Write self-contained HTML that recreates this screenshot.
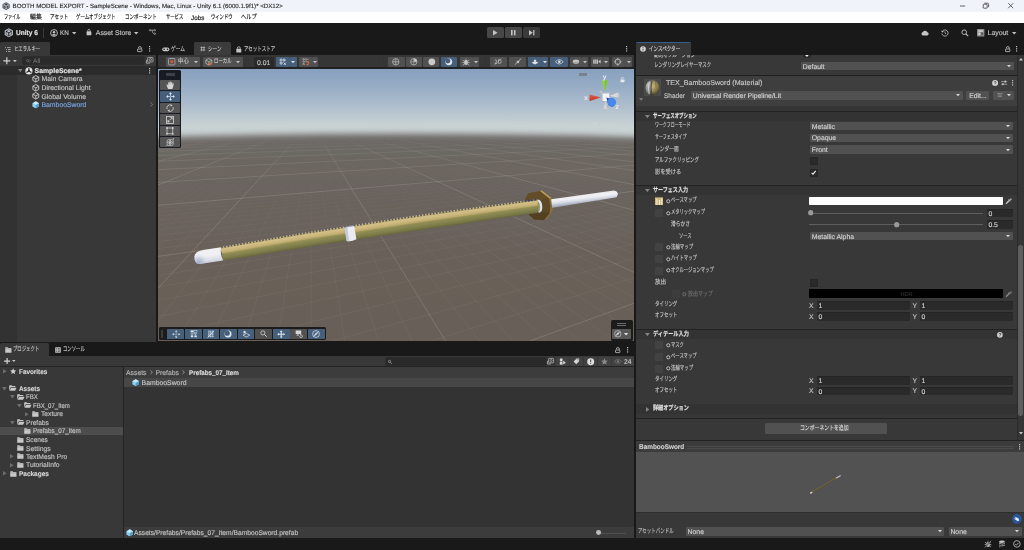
<!DOCTYPE html>
<html><head><meta charset="utf-8"><title>Unity</title>
<style>
html,body{margin:0;padding:0}
body{width:1024px;height:550px;overflow:hidden;background:#191919;position:relative;font-family:"Liberation Sans","Noto Sans CJK JP",sans-serif;text-rendering:geometricPrecision;}
.t{position:absolute;white-space:nowrap;line-height:1.12;-webkit-text-stroke:.14px currentColor;}
.j{transform-origin:0 50%;}
svg{overflow:visible}
#r{position:absolute;left:0;top:0;width:1024px;height:550px;overflow:hidden;will-change:transform;}
</style></head><body><div id="r">
<div style="position:absolute;left:0px;top:0px;width:1024px;height:12px;background:#f0f4fa;"></div>
<svg style="position:absolute;left:1.8px;top:1.6px;" width="8.2" height="8.2" viewBox="0 0 10 10"><path d="M5 .3 9.3 2.7V7.3L5 9.7.7 7.3V2.7Z" fill="#3c4046"/>
<path d="M5 5V8.4M5 5 2 3.3M5 5 8 3.3" stroke="#f0f4fa" stroke-width=".9" fill="none"/><path d="M5 1.6 7.9 3.3V6.7L5 8.4 2.1 6.7V3.3Z" fill="none" stroke="#f0f4fa" stroke-width=".5"/></svg>
<div class="t" style="left:12.6px;top:4px;font-size:6.15px;color:#2e2e2e;">BOOTH MODEL EXPORT - SampleScene - Windows, Mac, Linux - Unity 6.1 (6000.1.9f1)* &lt;DX12&gt;</div>
<svg style="position:absolute;left:958.5px;top:2px;" width="8" height="8" viewBox="0 0 8 8"><path d="M1 4H6.2" stroke="#222" stroke-width=".7"/></svg>
<svg style="position:absolute;left:982px;top:2px;" width="8" height="8" viewBox="0 0 8 8"><rect x="1.2" y="2.2" width="4" height="4" rx=".8" fill="none" stroke="#222" stroke-width=".7"/><path d="M2.4 1.2H5.4Q6.6 1.2 6.6 2.4V5.2" fill="none" stroke="#222" stroke-width=".7"/></svg>
<svg style="position:absolute;left:1007px;top:2px;" width="8" height="8" viewBox="0 0 8 8"><path d="M1.2 1.2 6.2 6.2M6.2 1.2 1.2 6.2" stroke="#222" stroke-width=".7"/></svg>
<div style="position:absolute;left:0px;top:12px;width:1024px;height:11px;background:#ffffff;"></div>
<div class="t j" style="left:3.75px;top:13.86px;font-size:6.5px;color:#111;transform:scaleX(0.627);">ファイル</div>
<div class="t j" style="left:29.5px;top:13.86px;font-size:6.5px;color:#111;transform:scaleX(0.909);">編集</div>
<div class="t j" style="left:49.5px;top:13.86px;font-size:6.5px;color:#111;transform:scaleX(0.700);">アセット</div>
<div class="t j" style="left:75.5px;top:13.86px;font-size:6.5px;color:#111;transform:scaleX(0.678);">ゲームオブジェクト</div>
<div class="t j" style="left:124.5px;top:13.86px;font-size:6.5px;color:#111;transform:scaleX(0.696);">コンポーネント</div>
<div class="t j" style="left:165.75px;top:13.86px;font-size:6.5px;color:#111;transform:scaleX(0.663);">サービス</div>
<div class="t j" style="left:211px;top:13.86px;font-size:6.5px;color:#111;transform:scaleX(0.661);">ウィンドウ</div>
<div class="t j" style="left:240.5px;top:13.86px;font-size:6.5px;color:#111;transform:scaleX(0.800);">ヘルプ</div>
<div class="t" style="left:191px;top:15px;font-size:6.3px;color:#111;">Jobs</div>
<div style="position:absolute;left:0px;top:23px;width:1024px;height:20px;background:#191919;"></div>
<svg style="position:absolute;left:4.3px;top:28px;" width="9.6" height="9.6" viewBox="0 0 10 10"><path d="M5 .3 9.3 2.7V7.3L5 9.7.7 7.3V2.7Z" fill="#b9bec6"/>
<path d="M5 5V8.4M5 5 2 3.3M5 5 8 3.3" stroke="#191919" stroke-width="1" fill="none"/><path d="M5 1.7 7.8 3.3V6.7L5 8.3 2.2 6.7V3.3Z" fill="none" stroke="#191919" stroke-width=".5"/></svg>
<div class="t j" style="left:15.9px;top:30px;font-size:7.0px;color:#e4e4e4;font-weight:bold;transform:scaleX(0.934);">Unity 6</div>
<div style="position:absolute;left:42.7px;top:28px;width:0.8px;height:9.5px;background:#3a3a3a;"></div>
<svg style="position:absolute;left:50px;top:28.6px;" width="8" height="8" viewBox="0 0 8 8"><circle cx="4" cy="4" r="3.4" fill="none" stroke="#c4c4c4" stroke-width=".9"/><circle cx="4" cy="3.2" r="1.2" fill="#c4c4c4"/><path d="M1.7 6.1Q4 3.9 6.3 6.1Q4 7.6 1.7 6.1Z" fill="#c4c4c4"/></svg>
<div class="t j" style="left:59.9px;top:30px;font-size:6.9px;color:#c4c4c4;transform:scaleX(0.918);">KN</div>
<svg style="position:absolute;left:72.1px;top:31.7px;" width="4.4" height="2.4" viewBox="0 0 4.4 2.4"><path d="M0 0H4.4L2.2 2.4Z" fill="#c4c4c4"/></svg>
<svg style="position:absolute;left:86px;top:29.3px;" width="5.9" height="6.6" viewBox="0 .4 7 8"><path d="M2 3.2V2.4a1.5 1.5 0 0 1 3 0V3.2" fill="none" stroke="#c4c4c4" stroke-width=".9"/><rect x=".6" y="3.2" width="5.8" height="4.8" rx=".7" fill="#c4c4c4"/></svg>
<div class="t" style="left:95.8px;top:30px;font-size:6.9px;color:#c4c4c4;">Asset Store</div>
<svg style="position:absolute;left:134.10000000000002px;top:31.7px;" width="4.4" height="2.4" viewBox="0 0 4.4 2.4"><path d="M0 0H4.4L2.2 2.4Z" fill="#c4c4c4"/></svg>
<svg style="position:absolute;left:149px;top:29.4px;" width="7" height="6.1" viewBox="0 0 8 7"><circle cx="1.3" cy="1.4" r=".9" fill="none" stroke="#c4c4c4" stroke-width=".7"/><circle cx="6.6" cy="1.4" r=".9" fill="none" stroke="#c4c4c4" stroke-width=".7"/><circle cx="6.6" cy="5.4" r=".9" fill="none" stroke="#c4c4c4" stroke-width=".7"/><path d="M2.2 1.4H5.7M3.6 1.4Q3.8 5.4 5.7 5.4" fill="none" stroke="#c4c4c4" stroke-width=".7"/></svg>
<div style="position:absolute;left:487.1px;top:27.2px;width:16.8px;height:10.8px;background:#474747;border-radius:1.6px;"></div>
<div style="position:absolute;left:505px;top:27.2px;width:17px;height:10.8px;background:#474747;border-radius:1.6px;"></div>
<div style="position:absolute;left:523px;top:27.2px;width:17px;height:10.8px;background:#3a3a3a;border-radius:1.6px;"></div>
<svg style="position:absolute;left:493px;top:30px;" width="5" height="5.4" viewBox="0 0 5 5.4"><path d="M0 0V5.4L4.6 2.7Z" fill="#c4c4c4"/></svg>
<svg style="position:absolute;left:511.2px;top:30px;" width="5" height="5.4" viewBox="0 0 5 5.4"><rect x="0" y="0" width="1.6" height="5.4" fill="#c4c4c4"/><rect x="2.9" y="0" width="1.6" height="5.4" fill="#c4c4c4"/></svg>
<svg style="position:absolute;left:528.8px;top:30px;" width="6" height="5.4" viewBox="0 0 6 5.4"><path d="M0 0V5.4L3.8 2.7Z" fill="#c4c4c4"/><rect x="4.2" y="0" width="1.2" height="5.4" fill="#c4c4c4"/></svg>
<svg style="position:absolute;left:921.3px;top:29.6px;" width="8.4" height="6" viewBox="0 0 8.4 6"><path d="M2 5.6A1.9 1.9 0 0 1 1.9 1.9 2.5 2.5 0 0 1 6.4 2.2 1.8 1.8 0 0 1 6.5 5.6Z" fill="#c4c4c4"/></svg>
<svg style="position:absolute;left:940.8px;top:29px;" width="8" height="8" viewBox="0 0 8 8"><path d="M1.2 2.6A3.1 3.1 0 1 1 .9 4.6" fill="none" stroke="#c4c4c4" stroke-width=".8"/><path d="M.2 1.4 1 3.4 3 2.8Z" fill="#c4c4c4"/><path d="M4 2.4V4.2L5.2 4.9" fill="none" stroke="#c4c4c4" stroke-width=".7"/></svg>
<svg style="position:absolute;left:960.5px;top:29px;" width="8" height="8" viewBox="0 0 8 8"><circle cx="3.2" cy="3.2" r="2.3" fill="none" stroke="#c4c4c4" stroke-width=".9"/><path d="M4.9 4.9 7.2 7.2" stroke="#c4c4c4" stroke-width="1.1"/></svg>
<svg style="position:absolute;left:977.3px;top:29px;" width="7.4" height="7.4" viewBox="0 0 7.4 7.4"><rect x="0" y="0" width="7.4" height="7.4" rx=".6" fill="#8c8c8c"/><rect x="1.3" y="1.3" width="4.8" height="1.5" fill="#d6d6d6"/><rect x="1.3" y="3.6" width="2" height="2.5" fill="#d6d6d6"/><rect x="4.1" y="3.6" width="2" height="2.5" fill="#5a5a5a"/></svg>
<div class="t" style="left:987.6px;top:30px;font-size:6.9px;color:#c4c4c4;">Layout</div>
<svg style="position:absolute;left:1012.4px;top:31.7px;" width="4.4" height="2.4" viewBox="0 0 4.4 2.4"><path d="M0 0H4.4L2.2 2.4Z" fill="#c4c4c4"/></svg>
<div style="position:absolute;left:0px;top:43px;width:156.3px;height:298.6px;background:#383838;"></div>
<div style="position:absolute;left:0px;top:43px;width:156.3px;height:12px;background:#191919;"></div>
<div style="position:absolute;left:0px;top:42.4px;width:50px;height:12.6px;background:#383838;border-radius:1.5px 1.5px 0 0;"></div>
<svg style="position:absolute;left:4.8px;top:46.6px;" width="5.6" height="5" viewBox="0 0 5.6 5"><path d="M0 .6H1M2 .6H5.6M1 2.5H2M3 2.5H5.6M1 4.4H2M3 4.4H5.6" stroke="#bdbdbd" stroke-width=".8"/></svg>
<div class="t j" style="left:13.6px;top:45.56px;font-size:6.5px;color:#c0c0c0;transform:scaleX(0.669);">ヒエラルキー</div>
<svg style="position:absolute;left:137.10000000000002px;top:46px;" width="5.4" height="6" viewBox="0 0 5.4 6"><path d="M4.3 3V2a1.45 1.45 0 0 0-2.9 0V2.3" fill="none" stroke="#c4c4c4" stroke-width=".8"/><rect x=".5" y="3" width="4.4" height="2.6" rx=".5" fill="none" stroke="#c4c4c4" stroke-width=".8"/></svg>
<svg style="position:absolute;left:148.70000000000002px;top:46.400000000000006px;" width="1.2" height="5.6" viewBox="0 0 1.2 5.6"><rect x="0" y="0" width="1.2" height="1.2" fill="#c4c4c4"/><rect x="0" y="2.2" width="1.2" height="1.2" fill="#c4c4c4"/><rect x="0" y="4.4" width="1.2" height="1.2" fill="#c4c4c4"/></svg>
<svg style="position:absolute;left:3.2px;top:57.2px;" width="7.6" height="7.6" viewBox="0 0 7.6 7.6"><path d="M3.8 .3V7.3M.3 3.8H7.3" stroke="#d0d0d0" stroke-width="1.2"/></svg>
<svg style="position:absolute;left:12.5px;top:59.5px;" width="3.8" height="2.2" viewBox="0 0 3.8 2.2"><path d="M0 0H3.8L1.9 2.2Z" fill="#c4c4c4"/></svg>
<div style="position:absolute;left:23.3px;top:57.1px;width:121px;height:7px;background:#2a2a2a;border-radius:1px;box-shadow:0 0 0 .5px #212121;"></div>
<svg style="position:absolute;left:26.4px;top:58.6px;" width="5" height="4.5" viewBox="0 0 5 4.5"><circle cx="1.7" cy="1.7" r="1.2" fill="none" stroke="#6e6e6e" stroke-width=".7"/><path d="M2.6 2.6 4 4M3.4 1.4H5" stroke="#6e6e6e" stroke-width=".7"/></svg>
<div class="t" style="left:33px;top:58px;font-size:6.6px;color:#6a6a6a;">All</div>
<svg style="position:absolute;left:146.3px;top:57.4px;" width="7.4" height="6.6" viewBox="0 0 7.4 6.6"><rect x="1.6" y=".4" width="5.4" height="4.6" rx=".8" fill="none" stroke="#c4c4c4" stroke-width=".7"/><circle cx="4.4" cy="2.6" r="1.1" fill="none" stroke="#c4c4c4" stroke-width=".7"/><path d="M.4 3V6.2H4" fill="none" stroke="#c4c4c4" stroke-width=".7"/></svg>
<div style="position:absolute;left:0px;top:66px;width:17.2px;height:275.6px;background:#323232;"></div>
<div style="position:absolute;left:0px;top:66px;width:156.3px;height:8.6px;background:#2b2b2b;"></div>
<div style="position:absolute;left:0px;top:65.6px;width:156.3px;height:0.6px;background:#2a2a2a;"></div>
<svg style="position:absolute;left:18.099999999999998px;top:69.10000000000001px;" width="4.6" height="3.2" viewBox="0 0 4.6 3.2"><path d="M0 0H4.6L2.3 3.2Z" fill="#808080"/></svg>
<svg style="position:absolute;left:24.6px;top:66.6px;" width="7.8" height="7.8" viewBox="0 0 10 10"><circle cx="5" cy="5" r="4.6" fill="#e4e4e4"/><path d="M5 5V1.2M5 5 1.8 7M5 5 8.2 7" stroke="#2a2a2a" stroke-width="1.5" fill="none"/><circle cx="5" cy="5" r="1.3" fill="#2a2a2a"/></svg>
<div class="t" style="left:34.6px;top:68px;font-size:6.85px;color:#e6e6e6;font-weight:bold;">SampleScene*</div>
<svg style="position:absolute;left:149.20000000000002px;top:67.7px;" width="1.2" height="5.6" viewBox="0 0 1.2 5.6"><rect x="0" y="0" width="1.2" height="1.2" fill="#c4c4c4"/><rect x="0" y="2.2" width="1.2" height="1.2" fill="#c4c4c4"/><rect x="0" y="4.4" width="1.2" height="1.2" fill="#c4c4c4"/></svg>
<svg style="position:absolute;left:32.2px;top:75.2px;" width="7.6" height="7.6" viewBox="0 0 10 10"><path d="M5 .7 8.9 2.9V7.1L5 9.3 1.1 7.1V2.9Z" fill="none" stroke="#c4c4c4" stroke-width="1.25"/><path d="M1.1 2.9 5 5.1 8.9 2.9M5 5.1V9.3" fill="none" stroke="#c4c4c4" stroke-width="1.25"/></svg>
<div class="t" style="left:41.5px;top:76px;font-size:6.85px;color:#c4c4c4;">Main Camera</div>
<svg style="position:absolute;left:32.2px;top:83.8px;" width="7.6" height="7.6" viewBox="0 0 10 10"><path d="M5 .7 8.9 2.9V7.1L5 9.3 1.1 7.1V2.9Z" fill="none" stroke="#c4c4c4" stroke-width="1.25"/><path d="M1.1 2.9 5 5.1 8.9 2.9M5 5.1V9.3" fill="none" stroke="#c4c4c4" stroke-width="1.25"/></svg>
<div class="t" style="left:41.5px;top:85px;font-size:6.85px;color:#c4c4c4;">Directional Light</div>
<svg style="position:absolute;left:32.2px;top:92.3px;" width="7.6" height="7.6" viewBox="0 0 10 10"><path d="M5 .7 8.9 2.9V7.1L5 9.3 1.1 7.1V2.9Z" fill="none" stroke="#c4c4c4" stroke-width="1.25"/><path d="M1.1 2.9 5 5.1 8.9 2.9M5 5.1V9.3" fill="none" stroke="#c4c4c4" stroke-width="1.25"/></svg>
<div class="t" style="left:41.5px;top:94px;font-size:6.85px;color:#c4c4c4;">Global Volume</div>
<svg style="position:absolute;left:32.2px;top:100.6px;" width="7.6" height="7.6" viewBox="0 0 10 10"><path d="M5 .4 9.2 2.8V7.2L5 9.6.8 7.2V2.8Z" fill="#7dc4ea"/><path d="M.8 2.8 5 5.2V9.6L.8 7.2Z" fill="#8ecfee"/><path d="M9.2 2.8 5 5.2V9.6L9.2 7.2Z" fill="#4f9fd0"/><path d="M5 .4 9.2 2.8 5 5.2.8 2.8Z" fill="#c6e9f8"/></svg>
<div class="t" style="left:41.5px;top:102px;font-size:6.85px;color:#7ba5e2;">BambooSword</div>
<svg style="position:absolute;left:150.4px;top:102.2px;" width="3" height="4.8" viewBox="0 0 3 4.8"><path d="M.4 .4 2.6 2.4.4 4.4" fill="none" stroke="#8a8a8a" stroke-width=".7"/></svg>
<div style="position:absolute;left:157.6px;top:43px;width:476.6px;height:298.3px;background:#383838;"></div>
<div style="position:absolute;left:156.3px;top:43px;width:1.5px;height:298.6px;background:#191919;"></div>
<div style="position:absolute;left:157.6px;top:43px;width:476.6px;height:12px;background:#191919;"></div>
<svg style="position:absolute;left:161.6px;top:46.8px;" width="7.6" height="4.6" viewBox="0 0 7.6 4.6"><rect x=".2" y=".4" width="7.2" height="3.8" rx="1.9" fill="#c4c4c4"/><circle cx="2.1" cy="2.3" r=".8" fill="#191919"/><circle cx="5.5" cy="2.3" r=".8" fill="#191919"/></svg>
<div class="t j" style="left:170.8px;top:45.56px;font-size:6.5px;color:#c4c4c4;transform:scaleX(0.717);">ゲーム</div>
<div style="position:absolute;left:194px;top:42.4px;width:36.8px;height:12.6px;background:#3c3c3c;border-radius:1.5px 1.5px 0 0;"></div>
<svg style="position:absolute;left:199.6px;top:46.4px;" width="5.6" height="5.6" viewBox="0 0 5.6 5.6"><path d="M.4 1.6H5.2M.4 4H5.2M1.6 .4V5.2M4 .4V5.2" stroke="#c4c4c4" stroke-width=".7"/></svg>
<div class="t j" style="left:208px;top:45.56px;font-size:6.5px;color:#c8c8c8;transform:scaleX(0.708);">シーン</div>
<svg style="position:absolute;left:236px;top:45.6px;" width="5.6" height="7" viewBox="0 0 5.6 7"><path d="M1.4 2.8V2.1a1.4 1.4 0 0 1 2.8 0V2.8" fill="none" stroke="#c4c4c4" stroke-width=".8"/><rect x=".3" y="2.8" width="5" height="3.8" rx=".6" fill="#c4c4c4"/></svg>
<div class="t j" style="left:244px;top:45.56px;font-size:6.5px;color:#c4c4c4;transform:scaleX(0.685);">アセットストア</div>
<svg style="position:absolute;left:626.1999999999999px;top:46.400000000000006px;" width="1.2" height="5.6" viewBox="0 0 1.2 5.6"><rect x="0" y="0" width="1.2" height="1.2" fill="#c4c4c4"/><rect x="0" y="2.2" width="1.2" height="1.2" fill="#c4c4c4"/><rect x="0" y="4.4" width="1.2" height="1.2" fill="#c4c4c4"/></svg>
<div style="position:absolute;left:157.6px;top:55px;width:476.6px;height:13.4px;background:#363636;"></div>
<div style="position:absolute;left:160.2px;top:57.6px;width:0.8px;height:8.8px;background:#333333;"></div>
<div style="position:absolute;left:161.8px;top:57.6px;width:0.8px;height:8.8px;background:#333333;"></div>
<div style="position:absolute;left:166px;top:57.3px;width:34.4px;height:9.4px;background:#515151;border-radius:1.2px;"></div>
<svg style="position:absolute;left:168.4px;top:58.2px;" width="7.4" height="7.4" viewBox="0 0 7.4 7.4"><rect x=".5" y=".5" width="6.4" height="6.4" rx="1" fill="none" stroke="#b4b4b4" stroke-width=".8"/><rect x="2.2" y="2.2" width="3" height="3" fill="#c9573c"/></svg>
<div class="t j" style="left:178px;top:58.42px;font-size:6.4px;color:#c4c4c4;transform:scaleX(0.856);">中心</div>
<svg style="position:absolute;left:193.6px;top:60.95px;" width="4" height="2.3" viewBox="0 0 4 2.3"><path d="M0 0H4L2.0 2.3Z" fill="#c4c4c4"/></svg>
<div style="position:absolute;left:202.6px;top:57.3px;width:40.4px;height:9.4px;background:#515151;border-radius:1.2px;"></div>
<svg style="position:absolute;left:205px;top:58.2px;" width="7.6" height="7.6" viewBox="0 0 10 10"><path d="M5 .7 8.9 2.9V7.1L5 9.3 1.1 7.1V2.9Z M1.1 2.9 5 5.1 8.9 2.9M5 5.1V9.3" fill="none" stroke="#c4c4c4" stroke-width=".9"/><circle cx="7.2" cy="7.6" r="2" fill="#d4673f"/></svg>
<div class="t j" style="left:214.2px;top:58.42px;font-size:6.4px;color:#c4c4c4;transform:scaleX(0.687);">ローカル</div>
<svg style="position:absolute;left:235.6px;top:60.95px;" width="4" height="2.3" viewBox="0 0 4 2.3"><path d="M0 0H4L2.0 2.3Z" fill="#c4c4c4"/></svg>
<div style="position:absolute;left:246.2px;top:57.6px;width:0.8px;height:8.8px;background:#333333;"></div>
<div style="position:absolute;left:247.8px;top:57.6px;width:0.8px;height:8.8px;background:#333333;"></div>
<div style="position:absolute;left:254.2px;top:57.3px;width:20.2px;height:9.4px;background:#2a2a2a;border-radius:1.2px;"></div>
<div class="t" style="left:257px;top:60px;font-size:6.85px;color:#c4c4c4;">0.01</div>
<div style="position:absolute;left:276.4px;top:57.3px;width:13.2px;height:9.4px;background:#46607c;border-radius:1.2px;"></div>
<div style="position:absolute;left:290px;top:57.3px;width:6.6px;height:9.4px;background:#46607c;border-radius:1.2px;"></div>
<svg style="position:absolute;left:279.4px;top:58.4px;" width="7.4" height="7.4" viewBox="0 0 7.4 7.4"><path d="M2 .4V7M5 .4V4M.4 2H7M.4 5H4" stroke="#e4e4e4" stroke-width=".8"/><path d="M4.6 4.6 7 7M7 4.6 4.6 7" stroke="#e4e4e4" stroke-width=".8"/></svg>
<svg style="position:absolute;left:291.3px;top:60.95px;" width="4" height="2.3" viewBox="0 0 4 2.3"><path d="M0 0H4L2.0 2.3Z" fill="#e4e4e4"/></svg>
<div style="position:absolute;left:298.8px;top:57.3px;width:12.8px;height:9.4px;background:#515151;border-radius:1.2px;"></div>
<div style="position:absolute;left:312px;top:57.3px;width:6.4px;height:9.4px;background:#515151;border-radius:1.2px;"></div>
<svg style="position:absolute;left:301.6px;top:58.4px;" width="7.4" height="7.4" viewBox="0 0 7.4 7.4"><path d="M.4 1.4H7M.4 3.8H7M.4 6.2H3M1.6 .2V7M4 .2V4" stroke="#c4c4c4" stroke-width=".7" stroke-dasharray="1 .6"/><path d="M4.4 6.4a1.5 1.5 0 1 0 0-2.4" fill="none" stroke="#d4673f" stroke-width="1.1"/></svg>
<svg style="position:absolute;left:313.2px;top:60.95px;" width="4" height="2.3" viewBox="0 0 4 2.3"><path d="M0 0H4L2.0 2.3Z" fill="#c4c4c4"/></svg>
<div style="position:absolute;left:383.2px;top:57.6px;width:0.8px;height:8.8px;background:#333333;"></div>
<div style="position:absolute;left:384.8px;top:57.6px;width:0.8px;height:8.8px;background:#333333;"></div>
<div style="position:absolute;left:388.2px;top:57.3px;width:16.4px;height:9.4px;background:#515151;border-radius:1.2px;"></div>
<div style="position:absolute;left:406px;top:57.3px;width:15.8px;height:9.4px;background:#515151;border-radius:1.2px;"></div>
<div style="position:absolute;left:423.2px;top:57.3px;width:16.2px;height:9.4px;background:#515151;border-radius:1.2px;"></div>
<div style="position:absolute;left:440.6px;top:57.3px;width:16.8px;height:9.4px;background:#46607c;border-radius:1.2px;"></div>
<svg style="position:absolute;left:392.4px;top:58.2px;" width="7.6" height="7.6" viewBox="0 0 7.6 7.6"><circle cx="3.8" cy="3.8" r="3.2" fill="none" stroke="#c4c4c4" stroke-width=".7"/><path d="M.6 3.8H7M3.8 .6V7" stroke="#c4c4c4" stroke-width=".7"/></svg>
<svg style="position:absolute;left:410.2px;top:58.2px;" width="7.6" height="7.6" viewBox="0 0 7.6 7.6"><circle cx="3.8" cy="3.8" r="3.2" fill="none" stroke="#c4c4c4" stroke-width=".7"/><path d="M3.8 .6V3.8H7A3.2 3.2 0 0 0 3.8 .6Z" fill="#c4c4c4"/><path d="M.6 3.8H7M3.8 .6V7" stroke="#c4c4c4" stroke-width=".5"/></svg>
<svg style="position:absolute;left:427.8px;top:58.2px;" width="7.6" height="7.6" viewBox="0 0 7.6 7.6"><circle cx="3.8" cy="3.8" r="3.4" fill="#c9c9c9"/></svg>
<svg style="position:absolute;left:445px;top:58.2px;" width="7.6" height="7.6" viewBox="0 0 7.6 7.6"><circle cx="3.8" cy="3.8" r="3.4" fill="#e8e8e8"/><circle cx="2.9" cy="3" r="2.5" fill="#46607c"/></svg>
<div style="position:absolute;left:459.8px;top:57.3px;width:13px;height:9.4px;background:#515151;border-radius:1.2px;"></div>
<div style="position:absolute;left:473.2px;top:57.3px;width:5.8px;height:9.4px;background:#515151;border-radius:1.2px;"></div>
<svg style="position:absolute;left:462.2px;top:58px;" width="8" height="8" viewBox="0 0 8 8"><ellipse cx="4" cy="4.4" rx="2" ry="2.6" fill="#c4c4c4"/><path d="M4 1.6V.6M.8 2.2 2.4 3.2M7.2 2.2 5.6 3.2M.4 4.6H2M7.6 4.6H6M.8 7.2 2.4 6M7.2 7.2 5.6 6" stroke="#c4c4c4" stroke-width=".7"/></svg>
<svg style="position:absolute;left:474.1px;top:60.95px;" width="4" height="2.3" viewBox="0 0 4 2.3"><path d="M0 0H4L2.0 2.3Z" fill="#c4c4c4"/></svg>
<div style="position:absolute;left:483.6px;top:57.6px;width:0.8px;height:8.8px;background:#333333;"></div>
<div style="position:absolute;left:485.2px;top:57.6px;width:0.8px;height:8.8px;background:#333333;"></div>
<div style="position:absolute;left:490.2px;top:57.3px;width:16.4px;height:9.4px;background:#515151;border-radius:1.2px;"></div>
<div style="position:absolute;left:509px;top:57.3px;width:16.8px;height:9.4px;background:#515151;border-radius:1.2px;"></div>
<svg style="position:absolute;left:494.4px;top:58.4px;" width="8" height="7.4" viewBox="0 0 8 7.4"><path d="M.8 2.2Q2.4 1 2.6 2.6T.8 5.4H3M4.4 1.6H5.6Q7.2 1.8 7.2 3.6T5.6 5.4H4.4Z" fill="none" stroke="#c4c4c4" stroke-width=".7"/><path d="M.6 6.8 7.4 .6" stroke="#c4c4c4" stroke-width=".7"/></svg>
<svg style="position:absolute;left:513.6px;top:58.4px;" width="8" height="7.4" viewBox="0 0 8 7.4"><path d="M4 2.2L4.6 3.2 5.8 3.4 4.9 4.2 5.2 5.4 4 4.8 2.8 5.4 3.1 4.2 2.2 3.4 3.4 3.2Z" fill="#c4c4c4"/><path d="M.8 6.8 7.2 .6" stroke="#c4c4c4" stroke-width=".8"/></svg>
<div style="position:absolute;left:528.1px;top:57.3px;width:12.6px;height:9.4px;background:#46607c;border-radius:1.2px;"></div>
<div style="position:absolute;left:541.1px;top:57.3px;width:6.8px;height:9.4px;background:#46607c;border-radius:1.2px;"></div>
<svg style="position:absolute;left:530.6px;top:58.4px;" width="8" height="7.4" viewBox="0 0 8 7.4"><path d="M4 3 7.4 4.7 4 6.4.6 4.7Z" fill="#e4e4e4"/><path d="M4 1 4.5 2 5.6 2.1 4.8 2.8 5 3.8 4 3.3 3 3.8 3.2 2.8 2.4 2.1 3.5 2Z" fill="#e4e4e4"/></svg>
<svg style="position:absolute;left:542.8px;top:60.95px;" width="4" height="2.3" viewBox="0 0 4 2.3"><path d="M0 0H4L2.0 2.3Z" fill="#e4e4e4"/></svg>
<div style="position:absolute;left:550.2px;top:57.3px;width:17.4px;height:9.4px;background:#46607c;border-radius:1.2px;"></div>
<svg style="position:absolute;left:554.6px;top:59.2px;" width="8.6" height="5.6" viewBox="0 0 8.6 5.6"><path d="M.4 2.8Q4.3 -1.6 8.2 2.8Q4.3 7.2 .4 2.8Z" fill="none" stroke="#e4e4e4" stroke-width=".7"/><circle cx="4.3" cy="2.8" r="1.3" fill="#e4e4e4"/></svg>
<div style="position:absolute;left:569.8px;top:57.3px;width:11.8px;height:9.4px;background:#515151;border-radius:1.2px;"></div>
<div style="position:absolute;left:582px;top:57.3px;width:6px;height:9.4px;background:#515151;border-radius:1.2px;"></div>
<svg style="position:absolute;left:571.6px;top:58.8px;" width="8" height="6.6" viewBox="0 0 8 6.6"><ellipse cx="4" cy="2.2" rx="3.2" ry="1.6" fill="#c4c4c4"/><path d="M.8 3.6Q4 6 7.2 3.6" fill="none" stroke="#c4c4c4" stroke-width=".8"/></svg>
<svg style="position:absolute;left:583.0px;top:60.95px;" width="4" height="2.3" viewBox="0 0 4 2.3"><path d="M0 0H4L2.0 2.3Z" fill="#c4c4c4"/></svg>
<div style="position:absolute;left:590.8px;top:57.3px;width:11.8px;height:9.4px;background:#515151;border-radius:1.2px;"></div>
<div style="position:absolute;left:603px;top:57.3px;width:6px;height:9.4px;background:#515151;border-radius:1.2px;"></div>
<svg style="position:absolute;left:592.6px;top:59.4px;" width="8" height="5.4" viewBox="0 0 8 5.4"><rect x=".2" y=".4" width="4.8" height="4.4" rx=".5" fill="#c4c4c4"/><path d="M5.2 2.6 7.6 .8V4.4Z" fill="#c4c4c4"/><path d="M1.8 .4V4.8M3.4 .4V4.8" stroke="#515151" stroke-width=".5"/></svg>
<svg style="position:absolute;left:604.0px;top:60.95px;" width="4" height="2.3" viewBox="0 0 4 2.3"><path d="M0 0H4L2.0 2.3Z" fill="#c4c4c4"/></svg>
<div style="position:absolute;left:611.7px;top:57.3px;width:13px;height:9.4px;background:#515151;border-radius:1.2px;"></div>
<div style="position:absolute;left:625.1px;top:57.3px;width:6.8px;height:9.4px;background:#515151;border-radius:1.2px;"></div>
<svg style="position:absolute;left:614.2px;top:58.2px;" width="7.6" height="7.6" viewBox="0 0 7.6 7.6"><circle cx="3.8" cy="3.8" r="2.7" fill="none" stroke="#c4c4c4" stroke-width=".8"/><path d="M3.8 0V2.2M3.8 5.4V7.6M0 3.8H2.2M5.4 3.8H7.6" stroke="#c4c4c4" stroke-width=".8"/></svg>
<svg style="position:absolute;left:626.5px;top:60.95px;" width="4" height="2.3" viewBox="0 0 4 2.3"><path d="M0 0H4L2.0 2.3Z" fill="#c4c4c4"/></svg>
<div style="position:absolute;left:157.8px;top:68.4px;width:476.4px;height:272.9px;overflow:hidden;background:linear-gradient(180deg,#87a0be 0px,#97acc5 18.6px,#adbdcd 37px,#c1ccd2 51.6px,#c9d3d4 58px,#c8d1d1 80px);">
<svg style="position:absolute;left:0;top:0" width="476.4" height="272.9" viewBox="0 0 476.4 272.9"><defs><filter id="hb" filterUnits="userSpaceOnUse" x="-40" y="0" width="556.4" height="312.9"><feGaussianBlur stdDeviation="0 3.1"/></filter><linearGradient id="gd" gradientUnits="userSpaceOnUse" x1="0" y1="67.6" x2="0" y2="272.9"><stop offset="0" stop-color="#6d6966"/><stop offset=".12" stop-color="#6c6661"/><stop offset=".4" stop-color="#6a625b"/><stop offset="1" stop-color="#686058"/></linearGradient></defs><path filter="url(#hb)" d="M-40 70.4Q238.2 61.2 516.4 70.4V312.9H-40Z" fill="url(#gd)"/></svg>
<svg style="position:absolute;left:0;top:0" width="476.4" height="272.9" viewBox="0 0 476.4 272.9"><defs><linearGradient id="gf" gradientUnits="userSpaceOnUse" x1="0" y1="69.6" x2="0" y2="121.6"><stop offset="0" stop-color="#111"/><stop offset=".3" stop-color="#888"/><stop offset="1" stop-color="#fff"/></linearGradient><linearGradient id="gf2" gradientUnits="userSpaceOnUse" x1="0" y1="81.6" x2="0" y2="201.6"><stop offset="0" stop-color="#000"/><stop offset=".35" stop-color="#666"/><stop offset="1" stop-color="#fff"/></linearGradient><mask id="gm" maskUnits="userSpaceOnUse" x="0" y="0" width="476.4" height="272.9"><rect x="0" y="69.6" width="476.4" height="272.9" fill="url(#gf)"/></mask><mask id="gm2" maskUnits="userSpaceOnUse" x="0" y="0" width="476.4" height="272.9"><rect x="0" y="77.6" width="476.4" height="272.9" fill="url(#gf2)"/></mask></defs><g mask="url(#gm2)"><path d="M-298.9 78.5L-1.3 63.1M-299.2 78.7L-0.2 63.1M-299.4 78.9L1.1 63.1M-299.7 79.1L2.4 63.1M-300.0 79.3L3.5 63.1M-298.7 79.5L4.8 63.1M-299.0 79.7L6.1 63.1M-299.3 79.9L7.3 63.1M-299.5 80.2L8.6 63.1M-298.5 80.5L11.0 63.1M-298.8 80.8L12.3 63.1M-299.0 81.0L13.4 63.1M-299.3 81.3L14.7 63.1M-299.6 81.5L16.0 63.1M-299.9 81.8L17.1 63.1M-298.5 81.9L18.4 63.1M-298.8 82.2L19.7 63.1M-299.1 82.5L20.9 63.1M-299.7 83.0L23.4 63.1M-298.3 83.2L24.6 63.1M-298.6 83.5L25.9 63.1M-298.9 83.8L27.2 63.1M-299.2 84.1L28.3 63.1M-299.5 84.4L29.6 63.1M-299.8 84.7L30.7 63.1M-298.3 84.9L32.0 63.1M-298.6 85.3L33.3 63.1M-299.3 85.9L35.7 63.1M-299.6 86.3L37.0 63.1M-300.0 86.6L38.2 63.1M-298.3 86.9L39.5 63.1M-298.7 87.2L40.7 63.1M-299.0 87.6L41.9 63.1M-299.4 88.0L43.2 63.1M-299.7 88.4L44.3 63.1M-298.0 88.7L45.6 63.1M-298.7 89.5L48.1 63.1M-299.1 90.0L49.3 63.1M-299.5 90.4L50.6 63.1M-299.9 90.9L51.8 63.1M-298.0 91.2L53.1 63.1M-298.4 91.6L54.3 63.1M-298.8 92.1L55.5 63.1M-299.2 92.6L56.8 63.1M-299.6 93.2L57.9 63.1M-298.0 94.0L60.5 63.1M-298.4 94.6L61.7 63.1M-298.9 95.2L62.9 63.1M-299.3 95.8L64.2 63.1M-299.8 96.4L65.4 63.1M-297.6 96.8L66.7 63.1M-298.1 97.4L67.9 63.1M-298.5 98.1L69.1 63.1M-299.0 98.8L70.4 63.1M-299.9 100.2L72.8 63.1M-297.6 100.7L74.1 63.1M-298.1 101.5L75.3 63.1M-298.6 102.3L76.5 63.1M-299.1 103.1L77.8 63.1M-299.6 104.0L79.0 63.1M-297.1 104.5L80.2 63.1M-297.6 105.4L81.5 63.1M-298.1 106.4L82.7 63.1M-299.2 108.4L85.2 63.1M-299.8 109.4L86.4 63.1M-297.0 110.1L87.7 63.1M-297.5 111.2L88.9 63.1M-298.1 112.4L90.1 63.1M-298.7 113.6L91.4 63.1M-299.4 114.9L92.6 63.1M-296.3 115.7L93.8 63.1M-296.9 117.1L95.1 63.1M-298.2 120.0L97.6 63.1M-298.9 121.6L98.8 63.1M-299.6 123.3L100.0 63.1M-296.0 124.3L101.3 63.1M-296.7 126.1L102.5 63.1M-297.5 128.0L103.7 63.1M-298.2 130.0L105.0 63.1M-299.0 132.1L106.2 63.1M-299.9 134.4L107.4 63.1M-296.5 138.3L109.9 63.1M-297.4 140.9L111.2 63.1M-298.3 143.7L112.4 63.1M-299.3 146.6L113.6 63.1M-294.4 148.6L114.9 63.1M-295.3 151.9L116.1 63.1M-296.3 155.4L117.3 63.1M-297.3 159.3L118.6 63.1M-298.4 163.4L119.8 63.1M-293.6 170.8L122.3 63.1M-294.7 175.9L123.5 63.1M-295.9 181.5L124.8 63.1M-297.1 187.6L126.0 63.1M-298.6 194.4L127.2 63.1M-291.1 198.9L128.5 63.1M-292.3 206.9L129.7 63.1M-293.7 215.8L130.9 63.1M-295.2 225.8L132.2 63.1M-298.9 250.2L134.6 63.1M-288.3 259.2L135.9 63.1M-289.8 275.7L137.1 63.1M-291.6 295.0L138.4 63.1M-293.7 318.1L139.6 63.1M-296.3 346.0L140.8 63.1M-299.5 380.7L142.1 63.1M-281.4 406.6L143.3 63.1M-283.2 458.5L144.5 63.1M-163.5 464.9L147.0 63.1M-95.1 456.7L148.2 63.1M-40.0 471.5L149.5 63.1M27.0 463.0L150.7 63.1M91.2 454.9L152.0 63.1M153.0 469.6L153.2 63.1M215.7 461.2L154.4 63.1M275.9 453.1L155.7 63.1M344.1 467.6L156.9 63.1M459.0 451.3L159.4 63.1M533.5 465.7L160.6 63.1M588.1 457.5L161.9 63.1M668.6 472.4L163.1 63.1M721.2 463.9L164.3 63.1M771.7 455.7L165.6 63.1M754.8 409.3L166.8 63.1M768.5 387.2L168.0 63.1M754.5 354.6L169.3 63.1M754.3 314.6L171.7 63.1M764.5 302.5L173.0 63.1M773.8 291.5L174.2 63.1M763.2 274.5L175.5 63.1M771.5 265.8L176.7 63.1M762.1 252.2L177.9 63.1M769.7 245.2L179.2 63.1M761.3 234.1L180.4 63.1M768.2 228.2L181.6 63.1M766.9 214.1L184.1 63.1M772.9 209.4L185.4 63.1M765.8 202.0L186.6 63.1M771.4 198.1L187.8 63.1M764.9 191.7L189.1 63.1M770.1 188.3L190.3 63.1M775.1 185.0L191.5 63.1M769.0 179.7L192.8 63.1M773.7 176.9L194.0 63.1M772.5 169.7L196.5 63.1M767.2 165.5L197.7 63.1M771.4 163.3L199.0 63.1M775.4 161.1L200.2 63.1M770.4 157.6L201.4 63.1M774.2 155.6L202.7 63.1M769.5 152.4L203.9 63.1M773.2 150.7L205.1 63.1M768.7 147.8L206.4 63.1M775.6 144.7L208.8 63.1M771.4 142.1L210.1 63.1M774.6 140.7L211.3 63.1M770.6 138.4L212.6 63.1M773.7 137.1L213.8 63.1M769.8 134.9L215.0 63.1M772.8 133.8L216.3 63.1M775.8 132.6L217.5 63.1M772.1 130.7L218.7 63.1M771.3 127.9L221.2 63.1M774.1 126.9L222.4 63.1M770.7 125.2L223.7 63.1M773.3 124.3L224.9 63.1M775.9 123.4L226.2 63.1M772.6 121.9L227.4 63.1M775.1 121.1L228.6 63.1M771.9 119.7L229.9 63.1M774.4 118.9L231.1 63.1M773.7 116.9L233.6 63.1M776.0 116.2L234.8 63.1M773.0 115.0L236.0 63.1M775.3 114.3L237.3 63.1M772.4 113.2L238.5 63.1M774.6 112.6L239.7 63.1M771.9 111.5L241.0 63.1M774.0 110.9L242.2 63.1M776.0 110.3L243.5 63.1M775.4 108.8L245.9 63.1M772.8 107.9L247.2 63.1M774.8 107.4L248.4 63.1M772.3 106.5L249.6 63.1M774.2 106.0L250.9 63.1M776.1 105.5L252.1 63.1M773.7 104.7L253.3 63.1M775.5 104.2L254.6 63.1M773.1 103.5L255.8 63.1M772.7 102.3L258.3 63.1M774.4 101.9L259.5 63.1M776.2 101.5L260.8 63.1M773.9 100.8L262.0 63.1M775.6 100.4L263.2 63.1M773.4 99.7L264.5 63.1M775.1 99.3L265.7 63.1M773.0 98.7L266.9 63.1M774.6 98.4L268.2 63.1M774.1 97.4L270.6 63.1M775.7 97.1L271.9 63.1M773.7 96.5L273.1 63.1M775.2 96.2L274.4 63.1M773.2 95.6L275.6 63.1M774.7 95.3L276.8 63.1M776.2 95.0L278.1 63.1M774.3 94.5L279.3 63.1M775.8 94.2L280.5 63.1M775.3 93.5L283.0 63.1M773.5 93.0L284.2 63.1M774.9 92.7L285.5 63.1M776.3 92.5L286.7 63.1M774.5 92.0L288.0 63.1M775.8 91.7L289.2 63.1M774.0 91.3L290.4 63.1M775.4 91.1L291.7 63.1M773.7 90.6L292.9 63.1M214.4 465.0L775.4 161.9M23.9 466.8L776.2 140.5M-288.4 447.6L776.0 116.5M-286.0 398.4L775.9 108.9M-284.1 360.1L776.3 102.9M-299.1 333.1L776.2 98.1M-296.4 307.5L776.1 94.3M-294.1 286.1L776.1 91.0M-292.2 268.2L776.3 88.2M-290.5 252.8L776.3 85.9M-289.1 239.4L776.2 83.9M-296.4 218.8L776.3 80.5M-294.9 209.6L776.3 79.1M-293.6 201.3L776.2 77.8M-292.3 193.9L776.2 76.7M-299.1 188.0L776.4 75.7M-297.8 181.9L776.3 74.7M-296.5 176.2L776.3 73.9M-295.3 171.1L776.2 73.1M-294.3 166.4L776.4 72.4M-298.6 158.5L776.3 71.1M-297.5 154.7L776.3 70.5M-296.5 151.2L776.4 70.0M-295.6 148.0L776.3 69.5M-294.7 144.9L776.3 69.0M-299.1 142.4L776.3 68.6M-298.2 139.7L776.4 68.2M-297.4 137.2L776.3 67.8M-296.5 134.8L776.3 67.5M-299.6 130.7L776.4 66.8M-298.7 128.6L776.4 66.5M-298.0 126.7L776.3 66.2M-297.2 124.9L776.3 65.9M-296.5 123.2L776.4 65.6M-299.9 121.7L776.4 65.4M-299.1 120.1L776.2 65.2M-298.5 118.6L772.8 65.1M-297.8 117.2L769.4 65.1M-296.6 114.5L762.6 64.9M-299.5 113.4L759.3 64.9M-298.8 112.2L756.1 64.8M-298.2 111.0L752.8 64.8M-297.7 109.9L749.6 64.7M-297.1 108.8L746.5 64.7M-299.7 107.9L743.3 64.6M-299.1 106.9L740.2 64.6M-298.6 105.9L737.2 64.5M-297.5 104.1L731.1 64.4M-299.9 103.4L728.2 64.4M-299.4 102.5L725.2 64.3M-298.9 101.7L722.3 64.3M-298.4 100.9L719.4 64.2M-297.9 100.2L716.6 64.2M-297.5 99.5L713.7 64.2M-299.6 98.8L710.9 64.1M-299.1 98.1L708.2 64.1M-298.2 96.8L702.7 64.0M-297.8 96.2L700.0 63.9M-299.8 95.7L697.4 63.9M-299.4 95.1L694.7 63.8M-298.9 94.5L692.1 63.8M-298.5 93.9L689.5 63.8M-298.1 93.4L687.0 63.7M-300.0 92.9L684.4 63.7M-299.6 92.4L681.9 63.6M-298.8 91.4L676.9 63.6M-298.4 91.0L674.5 63.5M-298.0 90.5L672.1 63.5M-299.7 90.1L669.7 63.4M-299.3 89.7L667.3 63.4M-299.0 89.2L665.0 63.4M-298.6 88.8L662.6 63.3M-298.2 88.4L660.3 63.3M-299.9 88.0L658.0 63.3M-299.1 87.3L653.5 63.2M-298.8 86.9L651.3 63.1M-298.5 86.5L649.1 63.1M-300.0 86.2L645.9 63.1M-299.7 85.9L642.2 63.1M-299.3 85.5L638.6 63.1M-299.0 85.2L634.9 63.1M-298.7 84.9L631.2 63.1M-298.3 84.5L627.7 63.1M-299.5 84.0L620.4 63.1M-299.1 83.7L616.7 63.1M-298.8 83.4L613.2 63.1M-298.5 83.1L609.5 63.1M-299.9 82.8L605.8 63.1M-299.6 82.6L602.2 63.1M-299.3 82.3L598.6 63.1M-299.0 82.0L595.0 63.1M-298.7 81.8L591.3 63.1M-299.7 81.3L584.1 63.1M-299.4 81.0L580.4 63.1M-299.1 80.8L576.8 63.1M-298.9 80.5L573.1 63.1M-298.6 80.3L569.6 63.1M-299.8 80.1L565.9 63.1M-299.6 79.9L562.2 63.1M-299.3 79.7L558.6 63.1M-299.0 79.4L554.9 63.1M-299.9 79.0L547.7 63.1M-299.7 78.8L544.0 63.1M-299.4 78.6L540.4 63.1M-299.1 78.4L536.9 63.1M-298.9 78.2L533.2 63.1M-298.6 78.0L529.5 63.1M-299.8 77.9L525.8 63.1M-299.5 77.7L522.3 63.1M-299.3 77.5L518.7 63.1M-298.8 77.1L511.3 63.1M-299.9 77.0L507.8 63.1M-299.6 76.8L504.1 63.1M-299.4 76.6L500.5 63.1M-299.1 76.5L496.8 63.1M-298.9 76.3L493.1 63.1M-300.0 76.2L489.6 63.1M-299.7 76.0L485.9 63.1M-299.5 75.8L482.2 63.1M-299.0 75.5L475.1 63.1M-298.8 75.4L471.4 63.1M-299.8 75.3L467.7 63.1M-299.6 75.1L464.0 63.1M-299.4 75.0L460.5 63.1M-299.2 74.8L456.9 63.1M-298.9 74.7L453.2 63.1M-299.9 74.6L449.5 63.1M-299.7 74.4L446.0 63.1M-299.3 74.1L438.7 63.1M-299.0 74.0L435.0 63.1M-300.0 73.9L431.5 63.1M-299.8 73.8L427.8 63.1M-299.6 73.6L424.1 63.1M-299.4 73.5L420.4 63.1M-299.2 73.4L416.8 63.1M-299.0 73.3L413.3 63.1M-299.8 73.2L409.6 63.1M-299.4 72.9L402.2 63.1M-299.2 72.8L398.8 63.1M-299.1 72.7L395.1 63.1M-299.9 72.6L391.4 63.1M-299.7 72.5L387.7 63.1M-299.5 72.4L384.2 63.1M-299.3 72.3L380.6 63.1M-299.2 72.2L376.9 63.1M-300.0 72.1L373.2 63.1M-299.6 71.9L366.0 63.1M-299.4 71.8L362.3 63.1M-299.2 71.7L358.7 63.1M-299.1 71.6L355.2 63.1M-299.9 71.5L351.5 63.1M-299.7 71.4L347.8 63.1M-299.5 71.3L344.1 63.1M-299.3 71.2L340.4 63.1M-299.2 71.1L337.0 63.1M-299.8 70.9L329.6 63.1M-299.6 70.8L325.9 63.1M-299.4 70.7L322.5 63.1M-299.2 70.7L318.8 63.1M-300.0 70.6L315.1 63.1M-299.8 70.5L311.4 63.1M-299.7 70.4L307.9 63.1M-299.5 70.3L304.2 63.1M-299.3 70.2L300.5 63.1" stroke="#c8c4be" stroke-opacity=".10" stroke-width=".7" fill="none"/></g><g mask="url(#gm)"><path d="M-298.7 78.3L-2.6 63.1M-299.8 80.4L9.9 63.1M-299.4 82.7L22.2 63.1M-298.9 85.6L34.5 63.1M-298.4 89.1L46.9 63.1M-297.6 93.5L59.2 63.1M-299.4 99.5L71.6 63.1M-298.6 107.3L84.0 63.1M-297.5 118.5L96.3 63.1M-295.7 135.8L108.7 63.1M-299.6 167.8L121.0 63.1M-296.9 237.2L133.4 63.1M-213.5 450.5L145.8 63.1M402.7 459.3L158.1 63.1M766.2 338.6L170.5 63.1M774.6 222.8L182.9 63.1M768.1 172.2L195.2 63.1M772.2 146.2L207.6 63.1M774.9 129.6L220.0 63.1M771.3 117.6L232.3 63.1M773.4 109.4L244.7 63.1M775.0 103.0L257.1 63.1M776.2 98.0L269.4 63.1M773.9 93.7L281.8 63.1M775.0 90.4L294.1 63.1M-168.4 468.8L776.1 126.5M-298.2 229.2L776.2 82.1M-299.7 162.6L776.3 71.7M-295.8 132.5L776.3 67.1M-297.2 115.8L766.0 65.0M-298.1 105.0L734.1 64.5M-298.7 97.5L705.4 64.0M-299.1 91.9L679.4 63.6M-299.5 87.7L655.7 63.2M-299.8 84.3L624.0 63.1M-298.4 81.5L587.6 63.1M-298.8 79.2L551.4 63.1M-299.0 77.3L515.0 63.1M-299.3 75.7L478.6 63.1M-299.5 74.3L442.3 63.1M-299.6 73.1L405.9 63.1M-299.8 72.0L369.7 63.1M-299.9 71.0L333.3 63.1" stroke="#d8d4ce" stroke-opacity=".23" stroke-width=".8" fill="none"/></g><defs><linearGradient id="bl" gradientUnits="userSpaceOnUse" x1="222.2" y1="153.2" x2="224.3" y2="168.4"><stop offset="0" stop-color="#8a7d50"/><stop offset=".07" stop-color="#d2bd82"/><stop offset=".14" stop-color="#d8c286"/><stop offset=".3" stop-color="#ccb576"/><stop offset=".4" stop-color="#bfa968"/><stop offset=".45" stop-color="#a59757"/><stop offset=".52" stop-color="#928e50"/><stop offset=".78" stop-color="#807e47"/><stop offset=".92" stop-color="#72713f"/><stop offset="1" stop-color="#67673b"/></linearGradient><linearGradient id="hd" gradientUnits="userSpaceOnUse" x1="427.2" y1="126.1" x2="428.2" y2="134.6"><stop offset="0" stop-color="#e6e7ec"/><stop offset=".3" stop-color="#f3f3f6"/><stop offset=".62" stop-color="#dcdfe8"/><stop offset="1" stop-color="#a9afc4"/></linearGradient><linearGradient id="cap" gradientUnits="userSpaceOnUse" x1="49.2" y1="180.6" x2="51.2" y2="194.6"><stop offset="0" stop-color="#f1f1f4"/><stop offset=".5" stop-color="#f0f0f4"/><stop offset=".85" stop-color="#d9dce6"/><stop offset="1" stop-color="#c9cedd"/></linearGradient><radialGradient id="capsh" gradientUnits="userSpaceOnUse" cx="40.7" cy="194.6" r="9"><stop offset="0" stop-color="#9eabc8" stop-opacity=".95"/><stop offset=".5" stop-color="#b4bed4" stop-opacity=".6"/><stop offset="1" stop-color="#d8dce8" stop-opacity="0"/></radialGradient></defs><polygon points="381.8,123.2 383.9,122.5 393.7,130.2 395.1,138.4 394.1,144.2 388.2,151.2 385.9,151.9 391.6,144.9 392.4,137.6 390.8,130.2" fill="#8a6d3a"/><polygon points="381.8,123.2 383.9,122.5 393.7,130.2 390.8,130.2" fill="#b89a5c"/><polygon points="367.4,130.6 370.7,125.3 381.8,123.2 390.8,130.2 392.4,137.6 391.6,144.9 385.9,151.9 376.5,151.5 370.7,146.6" fill="#5c4825"/><polygon points="367.4,130.6 370.7,125.3 381.8,123.2 390.8,130.2 380.2,132.6" fill="#634d27"/><polygon points="370.7,146.6 376.5,151.5 385.9,151.9 391.6,144.9 380.2,143.6" fill="#524021"/><ellipse cx="380.8" cy="138.1" rx="3.5" ry="6.7" fill="#b4bcd8" transform="rotate(-7 380.8 138.1)"/><ellipse cx="381.4" cy="137.8" rx="2.6" ry="5.8" fill="#dfe3ef" transform="rotate(-7 381.4 137.8)"/><ellipse cx="379.4" cy="138.4" rx="2.7" ry="6" fill="#9a9560" transform="rotate(-7 379.4 138.4)"/><polygon points="63.2,179.8 147.2,165.4 186.2,159.5 262.2,147.8 322.2,139.6 379.6,132.0 379.6,145.0 322.2,153.3 262.2,162.3 186.2,173.5 147.2,179.4 65.0,192.8" fill="#68683f"/><polygon points="63.2,179.8 147.2,165.4 186.2,159.5 262.2,147.8 322.2,139.6 379.6,132.0 379.6,144.3 322.2,152.6 262.2,161.6 186.2,172.8 147.2,178.7 64.9,192.2" fill="#717043"/><polygon points="63.2,179.8 147.2,165.4 186.2,159.5 262.2,147.8 322.2,139.6 379.6,132.0 379.6,143.4 322.2,151.7 262.2,160.6 186.2,171.8 147.2,177.7 64.8,191.2" fill="#7a7948"/><polygon points="63.2,179.8 147.2,165.4 186.2,159.5 262.2,147.8 322.2,139.6 379.6,132.0 379.6,142.1 322.2,150.3 262.2,159.1 186.2,170.4 147.2,176.3 64.6,189.9" fill="#83814d"/><polygon points="63.2,179.8 147.2,165.4 186.2,159.5 262.2,147.8 322.2,139.6 379.6,132.0 379.6,140.6 322.2,148.6 262.2,157.4 186.2,168.7 147.2,174.6 64.4,188.4" fill="#8b8952"/><polygon points="63.2,179.8 147.2,165.4 186.2,159.5 262.2,147.8 322.2,139.6 379.6,132.0 379.6,139.0 322.2,147.0 262.2,155.6 186.2,167.1 147.2,173.0 64.2,186.8" fill="#949056"/><polygon points="63.2,179.8 147.2,165.4 186.2,159.5 262.2,147.8 322.2,139.6 379.6,132.0 379.6,138.1 322.2,146.0 262.2,154.6 186.2,166.1 147.2,172.0 64.0,185.9" fill="#a69a5f"/><polygon points="63.2,179.8 147.2,165.4 186.2,159.5 262.2,147.8 322.2,139.6 379.6,132.0 379.6,137.5 322.2,145.4 262.2,153.9 186.2,165.4 147.2,171.3 64.0,185.3" fill="#bdaa6e"/><polygon points="63.2,179.8 147.2,165.4 186.2,159.5 262.2,147.8 322.2,139.6 379.6,132.0 379.6,136.4 322.2,144.3 262.2,152.7 186.2,164.3 147.2,170.2 63.8,184.2" fill="#c8b379"/><polygon points="63.2,179.8 147.2,165.4 186.2,159.5 262.2,147.8 322.2,139.6 379.6,132.0 379.6,135.2 322.2,143.0 262.2,151.4 186.2,163.0 147.2,168.9 63.6,183.0" fill="#cfbb82"/><polygon points="63.2,179.8 147.2,165.4 186.2,159.5 262.2,147.8 322.2,139.6 379.6,132.0 379.6,133.9 322.2,141.7 262.2,150.0 186.2,161.6 147.2,167.5 63.5,181.7" fill="#d2bf87"/><polygon points="63.2,179.8 147.2,165.4 186.2,159.5 262.2,147.8 322.2,139.6 379.6,132.0 379.6,132.8 322.2,140.4 262.2,148.7 186.2,160.3 147.2,166.2 63.3,180.6" fill="#b5a676"/><polyline points="63.2,179.6 147.2,165.2 186.2,159.3 262.2,147.6 322.2,139.4 379.6,131.8" fill="none" stroke="#5c5439" stroke-width="1.2" stroke-dasharray="1.7 1.5"/><polyline points="63.2,179.6 147.2,165.2 186.2,159.3 262.2,147.6 322.2,139.4 379.6,131.8" fill="none" stroke="#cdc9ba" stroke-width=".8" stroke-dasharray="1.5 1.7" stroke-dashoffset="1.6" transform="translate(0,-.4)"/><path d="M63.2 179.3L45.2 182.0Q36.8 183.4 36.4 188.6Q36.4 196.2 41.6 196.0L65.2 192.6Q61.6 185.6 63.2 179.3Z" fill="url(#cap)"/><path d="M63.2 179.3L45.2 182.0Q36.8 183.4 36.4 188.6Q36.4 196.2 41.6 196.0L65.2 192.6Q61.6 185.6 63.2 179.3Z" fill="url(#capsh)"/><path d="M186.6 159.6Q191.2 157.0 196.2 158.0L198.4 171.2Q193.2 174.2 188.6 173.0Z" fill="#e9ebf1"/><path d="M186.6 159.6L188.6 173.0L191.2 173.4L189.2 158.6Z" fill="#b9c0d4" opacity=".8"/><path d="M186.4 159.2L196.2 157.6" stroke="#5a6390" stroke-width=".9" opacity=".7"/><path d="M393.2 131.2L455.8 122.6Q460.0 123.0 459.8 126.6Q459.4 129.2 457.2 129.6L394.2 139.8Z" fill="url(#hd)"/><path d="M365.8 133.2L379.2 131.6" stroke="#2f3858" stroke-width=".9" opacity=".85"/></svg>
</div>
<div style="position:absolute;left:157.6px;top:67.4px;width:476.6px;height:1.3px;background:#222222;"></div>
<div style="position:absolute;left:159.1px;top:70.1px;width:22.1px;height:77.9px;background:#181b22;border-radius:1.6px;"></div>
<div style="position:absolute;left:166.2px;top:73px;width:9px;height:2.7px;background:#3c4049;"></div>
<div style="position:absolute;left:160.3px;top:79.6px;width:19.7px;height:10.9px;background:#555555;border-radius:.8px;"></div>
<div style="position:absolute;left:160.3px;top:91.1px;width:19.7px;height:10.9px;background:#46607c;border-radius:.8px;"></div>
<div style="position:absolute;left:160.3px;top:102.6px;width:19.7px;height:10.9px;background:#555555;border-radius:.8px;"></div>
<div style="position:absolute;left:160.3px;top:114.1px;width:19.7px;height:10.9px;background:#555555;border-radius:.8px;"></div>
<div style="position:absolute;left:160.3px;top:125.6px;width:19.7px;height:10.9px;background:#555555;border-radius:.8px;"></div>
<div style="position:absolute;left:160.3px;top:137.1px;width:19.7px;height:10px;background:#555555;border-radius:.8px;"></div>
<svg style="position:absolute;left:165.8px;top:81px;" width="8.4" height="8.4" viewBox="0 0 8.4 8.4"><path d="M2.2 8 1 5.6.4 3.6 1.4 3.4 2.2 4.8V1.4L3.2 1.2 3.5 3.6 3.6 .6 4.7 .6 4.9 3.6 5.3 1 6.3 1.2 6.3 3.9 6.9 2.2 7.8 2.5 7.2 5.8 6.4 8Z" fill="#d6d6d6"/></svg>
<svg style="position:absolute;left:165.6px;top:92.2px;" width="9" height="9" viewBox="0 0 9 9"><path d="M4.5 .2 6 2H3ZM4.5 8.8 3 7H6ZM.2 4.5 2 3V6ZM8.8 4.5 7 6V3Z" fill="#e4ecf6"/><path d="M4.5 2V7M2 4.5H7" stroke="#e4ecf6" stroke-width=".8"/><circle cx="4.5" cy="4.5" r="1" fill="#7fa6d8"/></svg>
<svg style="position:absolute;left:166px;top:104px;" width="8.2" height="8.2" viewBox="0 0 8.2 8.2"><path d="M1.2 5.2A3 3 0 0 1 5.6 1.4M7 3A3 3 0 0 1 2.6 6.8" fill="none" stroke="#d6d6d6" stroke-width=".8"/><path d="M4.8 .2 6.6 1.6 4.6 2.6ZM3.4 8 1.6 6.6 3.6 5.6Z" fill="#d6d6d6"/></svg>
<svg style="position:absolute;left:166.2px;top:115.6px;" width="7.8" height="7.8" viewBox="0 0 7.8 7.8"><rect x=".4" y=".4" width="7" height="7" fill="none" stroke="#d6d6d6" stroke-width=".8"/><rect x="1.4" y="4.4" width="2" height="2" fill="#d6d6d6"/><path d="M3.6 4.2 6 1.8M4.2 1.6H6.2V3.6" fill="none" stroke="#d6d6d6" stroke-width=".8"/></svg>
<svg style="position:absolute;left:166.2px;top:127.2px;" width="7.8" height="7.8" viewBox="0 0 7.8 7.8"><rect x="1" y="1" width="5.8" height="5.8" fill="none" stroke="#d6d6d6" stroke-width=".7"/><circle cx="1" cy="1" r=".9" fill="#d6d6d6"/><circle cx="6.8" cy="1" r=".9" fill="#d6d6d6"/><circle cx="1" cy="6.8" r=".9" fill="#d6d6d6"/><circle cx="6.8" cy="6.8" r=".9" fill="#d6d6d6"/></svg>
<svg style="position:absolute;left:166px;top:138.2px;" width="8.2" height="8.2" viewBox="0 0 8.2 8.2"><circle cx="3" cy="3.4" r="2" fill="none" stroke="#d6d6d6" stroke-width=".6"/><circle cx="5.4" cy="3.4" r="2" fill="none" stroke="#d6d6d6" stroke-width=".6"/><circle cx="3" cy="5.6" r="2" fill="none" stroke="#d6d6d6" stroke-width=".6"/><circle cx="5.4" cy="5.6" r="2" fill="none" stroke="#d6d6d6" stroke-width=".6"/><circle cx="7.4" cy=".9" r=".6" fill="#d6d6d6"/><circle cx=".8" cy="7.6" r=".5" fill="#d6d6d6"/></svg>
<div style="position:absolute;left:159.2px;top:327.4px;width:167px;height:12.4px;background:#1c1c1c;border-radius:1.6px;"></div>
<div style="position:absolute;left:160.8px;top:329.6px;width:2.2px;height:8px;background:#3c3c3c;"></div>
<div style="position:absolute;left:167.4px;top:329px;width:16.7px;height:10px;background:#46607c;border-radius:.6px;"></div>
<div style="position:absolute;left:184.98000000000002px;top:329px;width:16.7px;height:10px;background:#46607c;border-radius:.6px;"></div>
<div style="position:absolute;left:202.56px;top:329px;width:16.7px;height:10px;background:#46607c;border-radius:.6px;"></div>
<div style="position:absolute;left:220.14px;top:329px;width:16.7px;height:10px;background:#46607c;border-radius:.6px;"></div>
<div style="position:absolute;left:237.72px;top:329px;width:16.7px;height:10px;background:#46607c;border-radius:.6px;"></div>
<div style="position:absolute;left:255.3px;top:329px;width:16.7px;height:10px;background:#515151;border-radius:.6px;"></div>
<div style="position:absolute;left:272.88px;top:329px;width:16.7px;height:10px;background:#46607c;border-radius:.6px;"></div>
<div style="position:absolute;left:290.46px;top:329px;width:16.7px;height:10px;background:#515151;border-radius:.6px;"></div>
<div style="position:absolute;left:308.03999999999996px;top:329px;width:16.7px;height:10px;background:#46607c;border-radius:.6px;"></div>
<svg style="position:absolute;left:171.55px;top:329.8px;" width="8.4" height="8.4" viewBox="0 0 8.4 8.4"><path d="M4.2 .2 5.5 1.8H2.9ZM4.2 8.2 2.9 6.6H5.5ZM.2 4.2 1.8 2.9V5.5ZM8.2 4.2 6.6 5.5V2.9Z" fill="#dfe6ee"/><path d="M4.2 2V6.4M2 4.2H6.4" stroke="#dfe6ee" stroke-width=".6" stroke-dasharray=".8 .5"/></svg>
<svg style="position:absolute;left:189.53px;top:330.2px;" width="7.6" height="7.6" viewBox="0 0 7.6 7.6"><rect x=".6" y=".4" width="3" height="2" fill="#dfe6ee"/><rect x="4" y=".4" width="3" height="2" fill="none" stroke="#dfe6ee" stroke-width=".5"/><path d="M.6 3.8H7M2 3.8V5.4M5.6 3.8V5.4" stroke="#dfe6ee" stroke-width=".6"/><rect x=".8" y="5.4" width="2.4" height="1.8" fill="#dfe6ee"/><rect x="4.4" y="5.4" width="2.4" height="1.8" fill="#dfe6ee"/></svg>
<svg style="position:absolute;left:206.91px;top:330px;" width="8" height="8" viewBox="0 0 8 8"><path d="M1 1.2H7M1 3H7M1 4.8H7M1 6.6H7M1.8 .6V7.4M3.6 .6V7.4M5.4 .6V7.4" stroke="#dfe6ee" stroke-width=".5"/><path d="M.6 7.4 7.2 .8" stroke="#dfe6ee" stroke-width=".8"/></svg>
<svg style="position:absolute;left:224.48999999999998px;top:330px;" width="8" height="8" viewBox="0 0 8 8"><circle cx="4" cy="4" r="3.5" fill="#dfe6ee"/><circle cx="3.2" cy="3.2" r="2.6" fill="#46607c"/></svg>
<svg style="position:absolute;left:242.07px;top:330px;" width="8" height="8" viewBox="0 0 8 8"><path d="M4.4 3.4 7.8 5.2 4.4 7 1 5.2Z" fill="none" stroke="#dfe6ee" stroke-width=".7"/><path d="M2.6 .4 3.2 1.6 4.4 1.7 3.5 2.5 3.8 3.7 2.6 3.1 1.4 3.7 1.7 2.5.8 1.7 2 1.6Z" fill="#dfe6ee"/></svg>
<svg style="position:absolute;left:260.05px;top:330.4px;" width="7.4" height="7.4" viewBox="0 0 7.4 7.4"><circle cx="2.9" cy="2.9" r="2.1" fill="none" stroke="#d0d0d0" stroke-width=".8"/><path d="M4.5 4.5 6.8 6.8" stroke="#d0d0d0" stroke-width="1"/></svg>
<svg style="position:absolute;left:277.03000000000003px;top:329.8px;" width="8.4" height="8.4" viewBox="0 0 8.4 8.4"><path d="M4.2 .2 5.6 2H2.8ZM4.2 8.2 2.8 6.4H5.6ZM.2 4.2 2 2.8V5.6ZM8.2 4.2 6.4 5.6V2.8Z" fill="#dfe6ee"/><path d="M4.2 1.6V6.8M1.6 4.2H6.8" stroke="#dfe6ee" stroke-width="1.1"/></svg>
<svg style="position:absolute;left:295.01px;top:330px;" width="8" height="8" viewBox="0 0 8 8"><rect x=".6" y=".4" width="5.6" height="3.6" rx=".4" fill="#d6d6d6"/><path d="M1.6 5.2H4M2.8 4V5.2" stroke="#d6d6d6" stroke-width=".8"/><path d="M4.6 6.2a1.4 1.4 0 1 0 1.2-1.4" fill="none" stroke="#d6d6d6" stroke-width=".7"/><path d="M5 4 6.4 4.8 5.2 5.8Z" fill="#d6d6d6"/></svg>
<svg style="position:absolute;left:312.39px;top:330px;" width="8" height="8" viewBox="0 0 8 8"><circle cx="4" cy="4" r="3.4" fill="none" stroke="#dfe6ee" stroke-width=".7"/><path d="M6 2 4.8 4.8 2 6 3.2 3.2Z" fill="#dfe6ee"/><circle cx="4" cy="4" r=".6" fill="#46607c"/><path d="M1.2 6.8 6.8 1.2" stroke="#dfe6ee" stroke-width=".5"/></svg>
<div style="position:absolute;left:610.6px;top:320.2px;width:22px;height:20.6px;background:#1c1c1c;border-radius:1.6px;"></div>
<div style="position:absolute;left:617.2px;top:323px;width:8.8px;height:0.7px;background:#6a6a6a;"></div>
<div style="position:absolute;left:617.2px;top:325px;width:8.8px;height:0.7px;background:#6a6a6a;"></div>
<div style="position:absolute;left:612px;top:329px;width:19.4px;height:10.4px;background:#585858;border-radius:.8px;"></div>
<svg style="position:absolute;left:614px;top:330.4px;" width="7.6" height="7.6" viewBox="0 0 7.6 7.6"><circle cx="3.8" cy="3.8" r="3.2" fill="none" stroke="#d0d0d0" stroke-width=".7"/><path d="M5.8 1.8 4.6 4.6 1.8 5.8 3 3Z" fill="#d0d0d0"/><path d="M1.2 6.4 6.4 1.2" stroke="#d0d0d0" stroke-width=".5"/></svg>
<svg style="position:absolute;left:624.3px;top:333.2px;" width="4.2" height="2.4" viewBox="0 0 4.2 2.4"><path d="M0 0H4.2L2.1 2.4Z" fill="#e4e4e4"/></svg>
<div style="position:absolute;left:578.7px;top:72.7px;width:8.6px;height:2.9px;background:#77828f;"></div>
<svg style="position:absolute;left:570px;top:66px;" width="66" height="64" viewBox="0 0 66 64"><path d="M39 30 48 26.6 48.6 31.4Z" fill="#d9d9dc"/><path d="M47.6 26.2 50 28.8 48.8 31.8Z" fill="#c2c2c6"/><path d="M35.6 35 33 43.4 37.4 44Z" fill="#d4d2d4"/><path d="M33 43 35.2 45 37.6 43.6Z" fill="#bdbbbf"/><path d="M33.6 29.4 29.4 25.6 31.6 24.4Z" fill="#c9c9cc"/><path d="M31.4 14.8Q34.6 13.6 37.8 14.8L34.8 25.2Z" fill="#8ed148"/><path d="M34.6 14.2Q36.4 14.2 37.8 14.8L34.8 25.2Z" fill="#7cc23c"/><path d="M19.8 28.8Q19 31.8 19.8 35L30.6 31.2Z" fill="#d9513f"/><path d="M19.8 32Q19.6 33.6 19.8 35L30.6 31.2Z" fill="#c8432f"/><rect x="32.6" y="27.8" width="6.6" height="7.2" fill="#f4f4f4"/><path d="M32.6 27.8 33.8 26.8H39.8L39.2 27.8Z" fill="#dcdcdc"/><path d="M36.4 31.6 41 33 38.6 39.6Z" fill="#1d3f93"/><ellipse cx="41.8" cy="36.2" rx="4.3" ry="4.5" fill="#4a87ea" transform="rotate(-25 41.8 36.2)"/><path d="M37.8 38.6Q40.6 42 44.4 39.8Q41 41 37.8 38.6Z" fill="#3a6fd0"/></svg>
<div class="t" style="left:602.9px;top:74px;font-size:6.6px;color:#f2f2f2;">y</div>
<div class="t" style="left:584.2px;top:95px;font-size:6.6px;color:#f2f2f2;">x</div>
<div class="t" style="left:615.4px;top:104px;font-size:6.6px;color:#f2f2f2;">z</div>
<svg style="position:absolute;left:619.6px;top:77.2px;" width="5" height="5.4" viewBox="0 0 5 5.4"><path d="M1.2 2.4V1.8a1.3 1.3 0 0 1 2.6 0" fill="none" stroke="#e6e9ec" stroke-width=".7"/><rect x=".5" y="2.4" width="4" height="2.8" rx=".4" fill="#e6e9ec"/></svg>
<svg style="position:absolute;left:592px;top:120.6px;" width="6" height="5" viewBox="0 0 6 5"><path d="M5.4 .4 .6 2.5 5.4 4.6M.6 2.5H5.4" fill="none" stroke="#d3d8da" stroke-width=".6" opacity=".8"/></svg>
<div class="t" style="left:600px;top:121px;font-size:6.2px;color:rgba(214,220,222,.22);">Persp</div>
<div style="position:absolute;left:0px;top:341.6px;width:634.2px;height:2.4px;background:#191919;"></div>
<div style="position:absolute;left:0px;top:344px;width:634.2px;height:194px;background:#383838;"></div>
<div style="position:absolute;left:0px;top:344px;width:634.2px;height:11.6px;background:#191919;"></div>
<div style="position:absolute;left:0px;top:343px;width:49.4px;height:12.6px;background:#383838;border-radius:1.5px 1.5px 0 0;"></div>
<svg style="position:absolute;left:4.6px;top:346.7px;" width="6.6" height="6" viewBox="0 0 6.6 6"><path d="M.2 5.8V.7Q.2 .2 .7 .2H2.5L3.3 1H6Q6.5 1 6.5 1.5V5.8Z" fill="#c8c8c8"/><path d="M.2 1.9H6.5" stroke="#383838" stroke-width=".35" opacity=".6"/></svg>
<div class="t j" style="left:13.4px;top:346.16px;font-size:6.5px;color:#c4c4c4;transform:scaleX(0.669);">プロジェクト</div>
<svg style="position:absolute;left:55.4px;top:346.8px;" width="6" height="6" viewBox="0 0 6 6"><rect x=".2" y=".2" width="5.6" height="5.6" rx=".6" fill="#c4c4c4"/><path d="M1.2 1.6H2M2.8 1.6H4.8M1.2 3H2M2.8 3H4.8M1.2 4.4H2M2.8 4.4H4.8" stroke="#191919" stroke-width=".6"/></svg>
<div class="t j" style="left:63.4px;top:346.16px;font-size:6.5px;color:#c4c4c4;transform:scaleX(0.669);">コンソール</div>
<svg style="position:absolute;left:615.0999999999999px;top:346.8px;" width="5.4" height="6" viewBox="0 0 5.4 6"><path d="M4.3 3V2a1.45 1.45 0 0 0-2.9 0V2.3" fill="none" stroke="#c4c4c4" stroke-width=".8"/><rect x=".5" y="3" width="4.4" height="2.6" rx=".5" fill="none" stroke="#c4c4c4" stroke-width=".8"/></svg>
<svg style="position:absolute;left:626.6px;top:347.2px;" width="1.2" height="5.6" viewBox="0 0 1.2 5.6"><rect x="0" y="0" width="1.2" height="1.2" fill="#c4c4c4"/><rect x="0" y="2.2" width="1.2" height="1.2" fill="#c4c4c4"/><rect x="0" y="4.4" width="1.2" height="1.2" fill="#c4c4c4"/></svg>
<svg style="position:absolute;left:3.8px;top:358px;" width="6.2" height="6.2" viewBox="0 0 6.2 6.2"><path d="M3.1 .1V6.1M.1 3.1H6.1" stroke="#d6d6d6" stroke-width="1.2"/></svg>
<svg style="position:absolute;left:12.399999999999999px;top:360.15px;" width="3.6" height="2.1" viewBox="0 0 3.6 2.1"><path d="M0 0H3.6L1.8 2.1Z" fill="#c4c4c4"/></svg>
<div style="position:absolute;left:385.6px;top:357.8px;width:160px;height:7.4px;background:#2a2a2a;border-radius:1px;box-shadow:0 0 0 .5px #212121;"></div>
<svg style="position:absolute;left:388.4px;top:359.6px;" width="4.4" height="4.4" viewBox="0 0 4.4 4.4"><circle cx="1.5" cy="1.5" r="1.1" fill="none" stroke="#b0b0b0" stroke-width=".7"/><path d="M2.4 2.4 3.8 3.8" stroke="#b0b0b0" stroke-width=".8"/></svg>
<svg style="position:absolute;left:546.8px;top:358.2px;" width="7" height="6.6" viewBox="0 0 7 6.6"><rect x="1.6" y=".4" width="5" height="4.4" rx=".8" fill="none" stroke="#c4c4c4" stroke-width=".7"/><circle cx="4.2" cy="2.5" r="1" fill="none" stroke="#c4c4c4" stroke-width=".6"/><path d="M.4 2.8V6H3.8" fill="none" stroke="#c4c4c4" stroke-width=".7"/></svg>
<div style="position:absolute;left:556.4px;top:357.2px;width:12.8px;height:8.6px;background:#414141;border-radius:1px;"></div>
<div style="position:absolute;left:570px;top:357.2px;width:12.8px;height:8.6px;background:#414141;border-radius:1px;"></div>
<div style="position:absolute;left:584px;top:357.2px;width:12.8px;height:8.6px;background:#414141;border-radius:1px;"></div>
<div style="position:absolute;left:598.2px;top:357.2px;width:12.8px;height:8.6px;background:#414141;border-radius:1px;"></div>
<div style="position:absolute;left:612.2px;top:357.2px;width:21.4px;height:8.6px;background:#414141;border-radius:1px;"></div>
<svg style="position:absolute;left:559.4px;top:358px;" width="7" height="7" viewBox="0 0 7 7"><circle cx="2.2" cy="1.8" r="1.5" fill="#d6d6d6"/><rect x=".8" y="3.6" width="2.8" height="3" fill="#d6d6d6"/><path d="M4.2 2.6 6.8 4.8 4.2 6.6Z" fill="#d6d6d6"/></svg>
<svg style="position:absolute;left:572.8px;top:358.4px;" width="7" height="6.4" viewBox="0 0 7 6.4"><path d="M.6 3.6 3.6 .6H6.2V3.2L3.2 6.2Z" fill="#d6d6d6"/><circle cx="5" cy="1.8" r=".6" fill="#414141"/></svg>
<svg style="position:absolute;left:586.8px;top:357.8px;" width="7.4" height="7.4" viewBox="0 0 7.4 7.4"><circle cx="3.7" cy="3.7" r="3.5" fill="#e0e0e0"/><path d="M3.7 1.6V4.3M3.7 5.2V6" stroke="#414141" stroke-width="1"/></svg>
<svg style="position:absolute;left:601.2px;top:358.2px;" width="7" height="6.8" viewBox="0 0 7 6.8"><path d="M3.5 .3 4.5 2.5 6.8 2.7 5.1 4.3 5.6 6.6 3.5 5.4 1.4 6.6 1.9 4.3.2 2.7 2.5 2.5Z" fill="#8a8a8a"/></svg>
<svg style="position:absolute;left:613.6px;top:359.2px;" width="8" height="4.8" viewBox="0 0 8 4.8"><path d="M.4 2.4Q4 -1.4 7.6 2.4Q4 6.2 .4 2.4Z" fill="none" stroke="#7c7c7c" stroke-width=".6"/><circle cx="4" cy="2.4" r="1.1" fill="#7c7c7c"/></svg>
<div class="t j" style="left:623.8px;top:359px;font-size:7px;color:#b0b0b0;font-weight:bold;transform:scaleX(0.950);">24</div>
<div style="position:absolute;left:0px;top:366px;width:634.2px;height:0.8px;background:#242424;"></div>
<div style="position:absolute;left:123px;top:366.8px;width:1px;height:171.2px;background:#242424;"></div>
<div style="position:absolute;left:0px;top:426.8px;width:123px;height:8.5px;background:#4d4d4d;"></div>
<svg style="position:absolute;left:2.65px;top:369.4px;" width="3.7" height="4.6" viewBox="0 0 3.7 4.6"><path d="M0 0V4.6L3.7 2.3Z" fill="#6e6e6e"/></svg>
<svg style="position:absolute;left:9.7px;top:368.4px;" width="6.4" height="6.2" viewBox="0 0 7 6.8"><path d="M3.5 .3 4.5 2.5 6.8 2.7 5.1 4.3 5.6 6.6 3.5 5.4 1.4 6.6 1.9 4.3.2 2.7 2.5 2.5Z" fill="#d0d0d0"/></svg>
<div class="t j" style="left:18.8px;top:369px;font-size:6.85px;color:#d6d6d6;font-weight:bold;transform:scaleX(0.929);">Favorites</div>
<svg style="position:absolute;left:1.9499999999999997px;top:386.8px;" width="4.7" height="3.4" viewBox="0 0 4.7 3.4"><path d="M0 0H4.7L2.35 3.4Z" fill="#6e6e6e"/></svg>
<svg style="position:absolute;left:9.2px;top:385.2px;" width="7.6" height="6" viewBox="0 0 7.6 6"><path d="M.2 5.7V.7Q.2 .2 .7 .2H2.5L3.3 1H5.9Q6.4 1 6.4 1.5V2.1H1.9L.2 5.7Z" fill="#c8c8c8"/><path d="M2.1 2.7H7.5L6.1 5.8H.6Z" fill="#c8c8c8"/></svg>
<div class="t j" style="left:18.8px;top:386px;font-size:6.85px;color:#d6d6d6;font-weight:bold;transform:scaleX(0.935);">Assets</div>
<svg style="position:absolute;left:9.950000000000001px;top:395.3px;" width="4.7" height="3.4" viewBox="0 0 4.7 3.4"><path d="M0 0H4.7L2.35 3.4Z" fill="#6e6e6e"/></svg>
<svg style="position:absolute;left:16.9px;top:393.7px;" width="7.6" height="6" viewBox="0 0 7.6 6"><path d="M.2 5.7V.7Q.2 .2 .7 .2H2.5L3.3 1H5.9Q6.4 1 6.4 1.5V2.1H1.9L.2 5.7Z" fill="#c8c8c8"/><path d="M2.1 2.7H7.5L6.1 5.8H.6Z" fill="#c8c8c8"/></svg>
<div class="t j" style="left:25.7px;top:394px;font-size:6.85px;color:#c4c4c4;transform:scaleX(0.878);">FBX</div>
<svg style="position:absolute;left:17.25px;top:403.8px;" width="4.7" height="3.4" viewBox="0 0 4.7 3.4"><path d="M0 0H4.7L2.35 3.4Z" fill="#6e6e6e"/></svg>
<svg style="position:absolute;left:24.4px;top:402.2px;" width="7.6" height="6" viewBox="0 0 7.6 6"><path d="M.2 5.7V.7Q.2 .2 .7 .2H2.5L3.3 1H5.9Q6.4 1 6.4 1.5V2.1H1.9L.2 5.7Z" fill="#c8c8c8"/><path d="M2.1 2.7H7.5L6.1 5.8H.6Z" fill="#c8c8c8"/></svg>
<div class="t j" style="left:33.2px;top:403px;font-size:6.85px;color:#c4c4c4;transform:scaleX(0.881);">FBX_07_Item</div>
<svg style="position:absolute;left:25.349999999999998px;top:411.59999999999997px;" width="3.7" height="4.6" viewBox="0 0 3.7 4.6"><path d="M0 0V4.6L3.7 2.3Z" fill="#6e6e6e"/></svg>
<svg style="position:absolute;left:31.8px;top:410.79999999999995px;" width="6.6" height="6" viewBox="0 0 6.6 6"><path d="M.2 5.8V.7Q.2 .2 .7 .2H2.5L3.3 1H6Q6.5 1 6.5 1.5V5.8Z" fill="#c8c8c8"/><path d="M.2 1.9H6.5" stroke="#383838" stroke-width=".35" opacity=".6"/></svg>
<div class="t j" style="left:40.6px;top:411px;font-size:6.85px;color:#c4c4c4;transform:scaleX(0.979);">Texture</div>
<svg style="position:absolute;left:9.950000000000001px;top:420.9px;" width="4.7" height="3.4" viewBox="0 0 4.7 3.4"><path d="M0 0H4.7L2.35 3.4Z" fill="#6e6e6e"/></svg>
<svg style="position:absolute;left:16.9px;top:419.29999999999995px;" width="7.6" height="6" viewBox="0 0 7.6 6"><path d="M.2 5.7V.7Q.2 .2 .7 .2H2.5L3.3 1H5.9Q6.4 1 6.4 1.5V2.1H1.9L.2 5.7Z" fill="#c8c8c8"/><path d="M2.1 2.7H7.5L6.1 5.8H.6Z" fill="#c8c8c8"/></svg>
<div class="t j" style="left:25.7px;top:420px;font-size:6.85px;color:#c4c4c4;transform:scaleX(0.970);">Prefabs</div>
<svg style="position:absolute;left:24.4px;top:427.9px;" width="6.6" height="6" viewBox="0 0 6.6 6"><path d="M.2 5.8V.7Q.2 .2 .7 .2H2.5L3.3 1H6Q6.5 1 6.5 1.5V5.8Z" fill="#c8c8c8"/><path d="M.2 1.9H6.5" stroke="#383838" stroke-width=".35" opacity=".6"/></svg>
<div class="t j" style="left:33.2px;top:428px;font-size:6.85px;color:#c4c4c4;transform:scaleX(0.918);">Prefabs_07_Item</div>
<svg style="position:absolute;left:16.9px;top:436.5px;" width="6.6" height="6" viewBox="0 0 6.6 6"><path d="M.2 5.8V.7Q.2 .2 .7 .2H2.5L3.3 1H6Q6.5 1 6.5 1.5V5.8Z" fill="#c8c8c8"/><path d="M.2 1.9H6.5" stroke="#383838" stroke-width=".35" opacity=".6"/></svg>
<div class="t j" style="left:25.7px;top:437px;font-size:6.85px;color:#c4c4c4;transform:scaleX(0.958);">Scenes</div>
<svg style="position:absolute;left:16.9px;top:445.0px;" width="6.6" height="6" viewBox="0 0 6.6 6"><path d="M.2 5.8V.7Q.2 .2 .7 .2H2.5L3.3 1H6Q6.5 1 6.5 1.5V5.8Z" fill="#c8c8c8"/><path d="M.2 1.9H6.5" stroke="#383838" stroke-width=".35" opacity=".6"/></svg>
<div class="t j" style="left:25.7px;top:446px;font-size:6.85px;color:#c4c4c4;transform:scaleX(0.998);">Settings</div>
<svg style="position:absolute;left:10.15px;top:454.2px;" width="3.7" height="4.6" viewBox="0 0 3.7 4.6"><path d="M0 0V4.6L3.7 2.3Z" fill="#6e6e6e"/></svg>
<svg style="position:absolute;left:16.9px;top:453.4px;" width="6.6" height="6" viewBox="0 0 6.6 6"><path d="M.2 5.8V.7Q.2 .2 .7 .2H2.5L3.3 1H6Q6.5 1 6.5 1.5V5.8Z" fill="#c8c8c8"/><path d="M.2 1.9H6.5" stroke="#383838" stroke-width=".35" opacity=".6"/></svg>
<div class="t j" style="left:25.7px;top:454px;font-size:6.85px;color:#c4c4c4;transform:scaleX(0.984);">TextMesh Pro</div>
<svg style="position:absolute;left:10.15px;top:462.7px;" width="3.7" height="4.6" viewBox="0 0 3.7 4.6"><path d="M0 0V4.6L3.7 2.3Z" fill="#6e6e6e"/></svg>
<svg style="position:absolute;left:16.9px;top:461.9px;" width="6.6" height="6" viewBox="0 0 6.6 6"><path d="M.2 5.8V.7Q.2 .2 .7 .2H2.5L3.3 1H6Q6.5 1 6.5 1.5V5.8Z" fill="#c8c8c8"/><path d="M.2 1.9H6.5" stroke="#383838" stroke-width=".35" opacity=".6"/></svg>
<div class="t j" style="left:25.7px;top:462px;font-size:6.85px;color:#c4c4c4;transform:scaleX(0.988);">TutorialInfo</div>
<svg style="position:absolute;left:2.65px;top:471.3px;" width="3.7" height="4.6" viewBox="0 0 3.7 4.6"><path d="M0 0V4.6L3.7 2.3Z" fill="#6e6e6e"/></svg>
<svg style="position:absolute;left:9.5px;top:470.5px;" width="6.6" height="6" viewBox="0 0 6.6 6"><path d="M.2 5.8V.7Q.2 .2 .7 .2H2.5L3.3 1H6Q6.5 1 6.5 1.5V5.8Z" fill="#c8c8c8"/><path d="M.2 1.9H6.5" stroke="#383838" stroke-width=".35" opacity=".6"/></svg>
<div class="t j" style="left:18.8px;top:471px;font-size:6.85px;color:#d6d6d6;font-weight:bold;transform:scaleX(0.946);">Packages</div>
<div style="position:absolute;left:124px;top:366.8px;width:510.2px;height:171.2px;background:#333333;"></div>
<div style="position:absolute;left:124px;top:366.8px;width:510.2px;height:10.8px;background:#3c3c3c;"></div>
<div style="position:absolute;left:124px;top:377.6px;width:510.2px;height:9.2px;background:#474747;"></div>
<div class="t" style="left:126px;top:370px;font-size:6.85px;color:#b4b4b4;">Assets</div>
<svg style="position:absolute;left:150.4px;top:370.2px;" width="3" height="4.4" viewBox="0 0 3 4.4"><path d="M.4 .4 2.4 2.2.4 4" fill="none" stroke="#b0b0b0" stroke-width=".7"/></svg>
<div class="t" style="left:155.4px;top:370px;font-size:6.85px;color:#b4b4b4;">Prefabs</div>
<svg style="position:absolute;left:182.4px;top:370.2px;" width="3" height="4.4" viewBox="0 0 3 4.4"><path d="M.4 .4 2.4 2.2.4 4" fill="none" stroke="#b0b0b0" stroke-width=".7"/></svg>
<div class="t j" style="left:188.7px;top:370px;font-size:6.85px;color:#dcdcdc;font-weight:bold;transform:scaleX(0.918);">Prefabs_07_Item</div>
<svg style="position:absolute;left:132.4px;top:378.6px;" width="7.4" height="7.4" viewBox="0 0 10 10"><path d="M5 .4 9.2 2.8V7.2L5 9.6.8 7.2V2.8Z" fill="#7dc4ea"/><path d="M.8 2.8 5 5.2V9.6L.8 7.2Z" fill="#8ecfee"/><path d="M9.2 2.8 5 5.2V9.6L9.2 7.2Z" fill="#4f9fd0"/><path d="M5 .4 9.2 2.8 5 5.2.8 2.8Z" fill="#c6e9f8"/></svg>
<div class="t" style="left:141.6px;top:380px;font-size:6.85px;color:#c4c4c4;">BambooSword</div>
<div style="position:absolute;left:124px;top:527px;width:510.2px;height:11px;background:#3c3c3c;"></div>
<svg style="position:absolute;left:125.6px;top:528.8px;" width="7.6" height="7.6" viewBox="0 0 10 10"><path d="M5 .4 9.2 2.8V7.2L5 9.6.8 7.2V2.8Z" fill="#7dc4ea"/><path d="M.8 2.8 5 5.2V9.6L.8 7.2Z" fill="#8ecfee"/><path d="M9.2 2.8 5 5.2V9.6L9.2 7.2Z" fill="#4f9fd0"/><path d="M5 .4 9.2 2.8 5 5.2.8 2.8Z" fill="#c6e9f8"/></svg>
<div class="t j" style="left:134.4px;top:530px;font-size:6.85px;color:#c4c4c4;transform:scaleX(0.976);">Assets/Prefabs/Prefabs_07_Item/BambooSword.prefab</div>
<div style="position:absolute;left:601px;top:532.5px;width:24.6px;height:0.8px;background:#505050;"></div>
<svg style="position:absolute;left:596.4px;top:530.2px;" width="5.2" height="5.2" viewBox="0 0 5.2 5.2"><circle cx="2.6" cy="2.6" r="2.5" fill="#bcbcbc"/></svg>
<div style="position:absolute;left:634.2px;top:43px;width:1.4px;height:495px;background:#191919;"></div>
<div style="position:absolute;left:635.6px;top:43px;width:388.4px;height:495px;background:#383838;"></div>
<div style="position:absolute;left:635.6px;top:43px;width:388.4px;height:12px;background:#191919;"></div>
<div style="position:absolute;left:635.6px;top:42.2px;width:55px;height:12.8px;background:#383838;border-radius:1.5px 1.5px 0 0;border-top:.9px solid #34608f;box-sizing:border-box;"></div>
<svg style="position:absolute;left:640.2px;top:46.2px;" width="6" height="6" viewBox="0 0 6 6"><circle cx="3" cy="3" r="2.8" fill="#d8d8d8"/><path d="M3 2.6V4.6" stroke="#383838" stroke-width=".9"/><circle cx="3" cy="1.5" r=".5" fill="#383838"/></svg>
<div class="t j" style="left:648.6px;top:45.56px;font-size:6.5px;color:#d0d0d0;transform:scaleX(0.698);">インスペクター</div>
<svg style="position:absolute;left:1004.6999999999999px;top:45.8px;" width="5.4" height="6" viewBox="0 0 5.4 6"><path d="M4.3 3V2a1.45 1.45 0 0 0-2.9 0V2.3" fill="none" stroke="#c4c4c4" stroke-width=".8"/><rect x=".5" y="3" width="4.4" height="2.6" rx=".5" fill="none" stroke="#c4c4c4" stroke-width=".8"/></svg>
<svg style="position:absolute;left:1015.9px;top:45.900000000000006px;" width="1.2" height="5.6" viewBox="0 0 1.2 5.6"><rect x="0" y="0" width="1.2" height="1.2" fill="#c4c4c4"/><rect x="0" y="2.2" width="1.2" height="1.2" fill="#c4c4c4"/><rect x="0" y="4.4" width="1.2" height="1.2" fill="#c4c4c4"/></svg>
<div style="position:absolute;left:635.6px;top:55px;width:381.6px;height:5px;overflow:hidden">
<div class="t j" style="left:18.4px;top:-3.24px;font-size:6.5px;color:#c4c4c4;transform:scaleX(0.711);">動的オクルージョン</div>
<div style="position:absolute;left:167.6px;top:-5px;width:8px;height:8px;background:#2a2a2a;border-radius:1.2px;"></div>
<svg style="position:absolute;left:169px;top:-3.4px;" width="5.4" height="5.2" viewBox="0 0 5.4 5.2"><path d="M.6 2.8 2 4.2 4.8 .8" fill="none" stroke="#f0f0f0" stroke-width="1.1"/></svg>
</div>
<div class="t j" style="left:653.8px;top:62.36px;font-size:6.5px;color:#c4c4c4;transform:scaleX(0.678);">レンダリングレイヤーマスク</div>
<div style="position:absolute;left:801px;top:61.8px;width:213px;height:8.6px;background:#515151;border-radius:1.2px;"></div><div class="t" style="left:802.8px;top:64px;font-size:6.85px;color:#d2d2d2;">Default</div><svg style="position:absolute;left:1007.4px;top:65.14999999999999px;" width="4" height="2.3" viewBox="0 0 4 2.3"><path d="M0 0H4L2.0 2.3Z" fill="#d8d8d8"/></svg>
<div style="position:absolute;left:635.6px;top:75px;width:381.6px;height:1px;background:#1f1f1f;"></div>
<div style="position:absolute;left:635.6px;top:76px;width:381.6px;height:30.4px;background:#3e3e3e;"></div>
<div style="position:absolute;left:635.6px;top:106.2px;width:381.6px;height:4.8px;background:#353535;"></div>
<svg style="position:absolute;left:644px;top:79px;" width="17" height="17" viewBox="0 0 17 17"><defs><radialGradient id="ms" cx=".5" cy=".38" r=".62"><stop offset="0" stop-color="#c9b97f"/><stop offset=".55" stop-color="#94854f"/><stop offset="1" stop-color="#3a3526"/></radialGradient><radialGradient id="ms2" cx=".45" cy=".35" r=".7"><stop offset="0" stop-color="#bdbdbd"/><stop offset=".6" stop-color="#7d7d7d"/><stop offset="1" stop-color="#333"/></radialGradient><clipPath id="mc"><ellipse cx="8.5" cy="8.9" rx="7" ry="7.6"/></clipPath></defs><rect width="17" height="17" fill="#4c4c4c"/><ellipse cx="8.5" cy="8.9" rx="7" ry="7.6" fill="url(#ms)"/><g clip-path="url(#mc)"><path d="M0 0H8.4Q6.4 9 8.2 17H0Z" fill="url(#ms2)"/><path d="M5.4 2.6Q3.6 9 5.2 15.4" stroke="#e2e2e2" stroke-width="1.1" fill="none" opacity=".75"/><path d="M7.9 1.6Q6.4 9 7.8 16.4" stroke="#4e493a" stroke-width=".9" fill="none" opacity=".9"/><path d="M11.4 2Q12.8 9 11.6 16" stroke="#6b6040" stroke-width=".7" fill="none" opacity=".7"/></g></svg>
<svg style="position:absolute;left:638.8px;top:97.8px;" width="4.2" height="3" viewBox="0 0 4.2 3"><path d="M0 0H4.2L2.1 3Z" fill="#767676"/></svg>
<div class="t j" style="left:665.6px;top:80px;font-size:7.1px;color:#c8c8c8;transform:scaleX(1.001);">TEX_BambooSword (Material)</div>
<div class="t j" style="left:663.6px;top:93px;font-size:6.85px;color:#c4c4c4;transform:scaleX(0.951);">Shader</div>
<div style="position:absolute;left:691px;top:90.8px;width:271.8px;height:8.8px;background:#515151;border-radius:1.2px;"></div><div class="t" style="left:692.8px;top:93px;font-size:6.85px;color:#d2d2d2;">Universal Render Pipeline/Lit</div><svg style="position:absolute;left:956.1999999999999px;top:94.25px;" width="4" height="2.3" viewBox="0 0 4 2.3"><path d="M0 0H4L2.0 2.3Z" fill="#d8d8d8"/></svg>
<div style="position:absolute;left:966px;top:90.8px;width:23px;height:8.8px;background:#515151;border-radius:1.2px;"></div>
<div class="t" style="left:969.2px;top:93px;font-size:6.85px;color:#d2d2d2;">Edit...</div>
<div style="position:absolute;left:992.6px;top:90.8px;width:21.6px;height:8.8px;background:#515151;border-radius:1.2px;"></div>
<svg style="position:absolute;left:996.6px;top:92.8px;" width="5.6" height="4.8" viewBox="0 0 5.6 4.8"><path d="M0 .4H5.6M.6 2H5M.6 3.4H5" stroke="#9a9a9a" stroke-width=".7"/></svg>
<svg style="position:absolute;left:1007.4px;top:94.14999999999999px;" width="4" height="2.3" viewBox="0 0 4 2.3"><path d="M0 0H4L2.0 2.3Z" fill="#d8d8d8"/></svg>
<svg style="position:absolute;left:992.4px;top:79.6px;" width="6.2" height="6.2" viewBox="0 0 6.2 6.2"><circle cx="3.1" cy="3.1" r="3" fill="#d6d6d6"/><path d="M2.2 2.4Q2.3 1.4 3.2 1.4T4.1 2.4Q4 3 3.1 3.4V4" fill="none" stroke="#3e3e3e" stroke-width=".8"/><circle cx="3.1" cy="4.9" r=".45" fill="#3e3e3e"/></svg>
<svg style="position:absolute;left:1001px;top:79.8px;" width="6.4" height="6" viewBox="0 0 6.4 6"><path d="M.2 1.6H6.2M.2 4.2H6.2" stroke="#c4c4c4" stroke-width=".7"/><rect x="3.6" y=".6" width="1.4" height="2" fill="#c4c4c4"/><rect x="1.2" y="3.2" width="1.4" height="2" fill="#c4c4c4"/></svg>
<svg style="position:absolute;left:1012.0px;top:80.0px;" width="1.2" height="5.6" viewBox="0 0 1.2 5.6"><rect x="0" y="0" width="1.2" height="1.2" fill="#c4c4c4"/><rect x="0" y="2.2" width="1.2" height="1.2" fill="#c4c4c4"/><rect x="0" y="4.4" width="1.2" height="1.2" fill="#c4c4c4"/></svg>
<div style="position:absolute;left:635.6px;top:111.0px;width:381.6px;height:0.8px;background:#232323;"></div><div style="position:absolute;left:635.6px;top:111.8px;width:381.6px;height:9.4px;background:#333333;"></div><svg style="position:absolute;left:645.0px;top:115.0px;" width="4.8" height="3.2" viewBox="0 0 4.8 3.2"><path d="M0 0H4.8L2.4 3.2Z" fill="#858585"/></svg><div class="t j" style="left:652.8px;top:112.70px;font-size:6.6px;color:#e0e0e0;font-weight:bold;transform:scaleX(0.667);">サーフェスオプション</div>
<div class="t j" style="left:654.6px;top:122.36px;font-size:6.5px;color:#c4c4c4;transform:scaleX(0.604);">ワークフローモード</div>
<div style="position:absolute;left:810px;top:121.8px;width:202.70000000000005px;height:8.6px;background:#515151;border-radius:1.2px;"></div><div class="t" style="left:811.8px;top:124px;font-size:6.85px;color:#d2d2d2;">Metallic</div><svg style="position:absolute;left:1006.1px;top:125.14999999999999px;" width="4" height="2.3" viewBox="0 0 4 2.3"><path d="M0 0H4L2.0 2.3Z" fill="#d8d8d8"/></svg>
<div class="t j" style="left:654.6px;top:134.16px;font-size:6.5px;color:#c4c4c4;transform:scaleX(0.611);">サーフェスタイプ</div>
<div style="position:absolute;left:810px;top:133.60000000000002px;width:202.70000000000005px;height:8.6px;background:#515151;border-radius:1.2px;"></div><div class="t" style="left:811.8px;top:135px;font-size:6.85px;color:#d2d2d2;">Opaque</div><svg style="position:absolute;left:1006.1px;top:136.95000000000002px;" width="4" height="2.3" viewBox="0 0 4 2.3"><path d="M0 0H4L2.0 2.3Z" fill="#d8d8d8"/></svg>
<div class="t j" style="left:654.6px;top:145.86px;font-size:6.5px;color:#c4c4c4;transform:scaleX(0.727);">レンダー面</div>
<div style="position:absolute;left:810px;top:145.3px;width:202.70000000000005px;height:8.6px;background:#515151;border-radius:1.2px;"></div><div class="t" style="left:811.8px;top:147px;font-size:6.85px;color:#d2d2d2;">Front</div><svg style="position:absolute;left:1006.1px;top:148.65px;" width="4" height="2.3" viewBox="0 0 4 2.3"><path d="M0 0H4L2.0 2.3Z" fill="#d8d8d8"/></svg>
<div class="t j" style="left:654.6px;top:157.46px;font-size:6.5px;color:#c4c4c4;transform:scaleX(0.675);">アルファクリッピング</div>
<div style="position:absolute;left:809.6px;top:157.2px;width:8px;height:8px;background:#2a2a2a;border-radius:1.2px;box-shadow:inset 0 0 0 .5px #222;"></div>
<div class="t j" style="left:654.6px;top:169.36px;font-size:6.5px;color:#c4c4c4;transform:scaleX(0.808);">影を受ける</div>
<div style="position:absolute;left:809.6px;top:169px;width:8px;height:8px;background:#2a2a2a;border-radius:1.2px;box-shadow:inset 0 0 0 .5px #222;"></div><svg style="position:absolute;left:811.0px;top:170.4px;" width="5.4" height="5.2" viewBox="0 0 5.4 5.2"><path d="M.6 2.8 2 4.2 4.8 .8" fill="none" stroke="#f0f0f0" stroke-width="1.1"/></svg>
<div style="position:absolute;left:635.6px;top:185.2px;width:381.6px;height:0.8px;background:#232323;"></div><div style="position:absolute;left:635.6px;top:186.0px;width:381.6px;height:9.4px;background:#333333;"></div><svg style="position:absolute;left:645.0px;top:189.2px;" width="4.8" height="3.2" viewBox="0 0 4.8 3.2"><path d="M0 0H4.8L2.4 3.2Z" fill="#858585"/></svg><div class="t j" style="left:652.8px;top:186.90px;font-size:6.6px;color:#e0e0e0;font-weight:bold;transform:scaleX(0.765);">サーフェス入力</div>
<svg style="position:absolute;left:655px;top:197px;" width="8" height="8" viewBox="0 0 8 8"><rect width="8" height="8" fill="#cdb980"/><path d="M1.4 8V2.2Q1.8 1 2.4 2.2V8M4 8V3H5V8M6.2 8V1.4Q6.8 .6 7.2 1.4V8" fill="#f2ecd6"/><path d="M0 0H8V.8H0Z" fill="#8f7e4a"/></svg>
<svg style="position:absolute;left:665.7px;top:198.79999999999998px;" width="4.6" height="4.6" viewBox="0 0 4.6 4.6"><circle cx="2.3" cy="2.3" r="1.6" fill="none" stroke="#c4c4c4" stroke-width=".95"/></svg>
<div class="t j" style="left:671px;top:197.36px;font-size:6.5px;color:#c4c4c4;transform:scaleX(0.664);">ベースマップ</div>
<div style="position:absolute;left:809.4px;top:196.8px;width:193.4px;height:8.6px;background:#ffffff;border-radius:.8px;"></div>
<svg style="position:absolute;left:1005.4px;top:197.79999999999998px;" width="6.8" height="6.8" viewBox="0 0 6.8 6.8"><path d="M.6 6.2 1 4.8 3.8 2 4.8 3 2 5.8Z" fill="#c4c4c4"/><path d="M3.6 1.4 5.4 3.2M4.4 2.2 5.6 .8Q6.4 .6 6.2 1.4L5 2.6" stroke="#c4c4c4" stroke-width="1" fill="none"/></svg>
<div style="position:absolute;left:655px;top:209px;width:8px;height:8px;background:#424242;border-radius:.6px;"></div>
<svg style="position:absolute;left:665.7px;top:210.79999999999998px;" width="4.6" height="4.6" viewBox="0 0 4.6 4.6"><circle cx="2.3" cy="2.3" r="1.6" fill="none" stroke="#c4c4c4" stroke-width=".95"/></svg>
<div class="t j" style="left:671px;top:209.36px;font-size:6.5px;color:#c4c4c4;transform:scaleX(0.654);">メタリックマップ</div>
<div style="position:absolute;left:809.4px;top:212.7px;width:173.6px;height:0.8px;background:#5e5e5e;"></div>
<svg style="position:absolute;left:808.4px;top:210.4px;" width="5.4" height="5.4" viewBox="0 0 5.4 5.4"><circle cx="2.7" cy="2.7" r="2.6" fill="#999"/></svg>
<div style="position:absolute;left:986.6px;top:208.6px;width:26.2px;height:8.8px;background:#2a2a2a;border-radius:1.2px;box-shadow:inset 0 .6px 0 #1e1e1e;"></div><div class="t" style="left:988.4px;top:211px;font-size:6.85px;color:#d2d2d2;">0</div>
<div class="t j" style="left:671.4px;top:220.86px;font-size:6.5px;color:#c4c4c4;transform:scaleX(0.727);">滑らかさ</div>
<div style="position:absolute;left:809.4px;top:224.3px;width:173.6px;height:0.8px;background:#5e5e5e;"></div>
<svg style="position:absolute;left:893.6px;top:222px;" width="5.4" height="5.4" viewBox="0 0 5.4 5.4"><circle cx="2.7" cy="2.7" r="2.6" fill="#999"/></svg>
<div style="position:absolute;left:986.6px;top:220.2px;width:26.2px;height:8.8px;background:#2a2a2a;border-radius:1.2px;box-shadow:inset 0 .6px 0 #1e1e1e;"></div><div class="t" style="left:988.4px;top:222px;font-size:6.85px;color:#d2d2d2;">0.5</div>
<div class="t j" style="left:679px;top:232.56px;font-size:6.5px;color:#c4c4c4;transform:scaleX(0.649);">ソース</div>
<div style="position:absolute;left:810px;top:231.8px;width:202.70000000000005px;height:8.6px;background:#515151;border-radius:1.2px;"></div><div class="t" style="left:811.8px;top:234px;font-size:6.85px;color:#d2d2d2;">Metallic Alpha</div><svg style="position:absolute;left:1006.1px;top:235.15px;" width="4" height="2.3" viewBox="0 0 4 2.3"><path d="M0 0H4L2.0 2.3Z" fill="#d8d8d8"/></svg>
<div style="position:absolute;left:655px;top:243.4px;width:8px;height:8px;background:#424242;border-radius:.6px;"></div>
<svg style="position:absolute;left:665.7px;top:245.2px;" width="4.6" height="4.6" viewBox="0 0 4.6 4.6"><circle cx="2.3" cy="2.3" r="1.6" fill="none" stroke="#c4c4c4" stroke-width=".95"/></svg>
<div class="t j" style="left:671px;top:243.76px;font-size:6.5px;color:#c4c4c4;transform:scaleX(0.680);">法線マップ</div>
<div style="position:absolute;left:655px;top:254.89999999999998px;width:8px;height:8px;background:#424242;border-radius:.6px;"></div>
<svg style="position:absolute;left:665.7px;top:256.7px;" width="4.6" height="4.6" viewBox="0 0 4.6 4.6"><circle cx="2.3" cy="2.3" r="1.6" fill="none" stroke="#c4c4c4" stroke-width=".95"/></svg>
<div class="t j" style="left:671px;top:255.26px;font-size:6.5px;color:#c4c4c4;transform:scaleX(0.664);">ハイトマップ</div>
<div style="position:absolute;left:655px;top:266.5px;width:8px;height:8px;background:#424242;border-radius:.6px;"></div>
<svg style="position:absolute;left:665.7px;top:268.3px;" width="4.6" height="4.6" viewBox="0 0 4.6 4.6"><circle cx="2.3" cy="2.3" r="1.6" fill="none" stroke="#c4c4c4" stroke-width=".95"/></svg>
<div class="t j" style="left:671px;top:266.86px;font-size:6.5px;color:#c4c4c4;transform:scaleX(0.663);">オクルージョンマップ</div>
<div class="t j" style="left:654.6px;top:279.36px;font-size:6.5px;color:#c4c4c4;transform:scaleX(0.858);">放出</div>
<div style="position:absolute;left:809.6px;top:279px;width:8px;height:8px;background:#2a2a2a;border-radius:1.2px;box-shadow:inset 0 0 0 .5px #222;"></div>
<div style="position:absolute;left:671.6px;top:290.4px;width:8px;height:8px;background:#3d3d3d;border-radius:.6px;"></div>
<svg style="position:absolute;left:681.7px;top:292.09999999999997px;" width="4.6" height="4.6" viewBox="0 0 4.6 4.6"><circle cx="2.3" cy="2.3" r="1.6" fill="none" stroke="#6e6e6e" stroke-width=".95"/></svg>
<div class="t j" style="left:687.6px;top:290.66px;font-size:6.5px;color:#6e6e6e;transform:scaleX(0.762);">放出マップ</div>
<div style="position:absolute;left:809.4px;top:289.3px;width:193.4px;height:8.4px;background:#000000;border-radius:.8px;"></div>
<div class="t" style="left:900.4px;top:292px;font-size:5.6px;color:#2e2e2e;">HDR</div>
<svg style="position:absolute;left:1005.4px;top:290.6px;" width="6.8" height="6.8" viewBox="0 0 6.8 6.8"><path d="M.6 6.2 1 4.8 3.8 2 4.8 3 2 5.8Z" fill="#8a8a8a"/><path d="M3.6 1.4 5.4 3.2M4.4 2.2 5.6 .8Q6.4 .6 6.2 1.4L5 2.6" stroke="#8a8a8a" stroke-width="1" fill="none"/></svg>
<div class="t j" style="left:654.6px;top:301.36px;font-size:6.5px;color:#c4c4c4;transform:scaleX(0.686);">タイリング</div>
<div class="t" style="left:808.9px;top:303px;font-size:6.85px;color:#c4c4c4;">X</div><div style="position:absolute;left:816.6px;top:301.0px;width:93px;height:8.8px;background:#2a2a2a;border-radius:1.2px;box-shadow:inset 0 .6px 0 #1e1e1e;"></div><div class="t" style="left:818.4px;top:303px;font-size:6.85px;color:#d2d2d2;">1</div><div class="t" style="left:912.4px;top:303px;font-size:6.85px;color:#c4c4c4;">Y</div><div style="position:absolute;left:919.8px;top:301.0px;width:93px;height:8.8px;background:#2a2a2a;border-radius:1.2px;box-shadow:inset 0 .6px 0 #1e1e1e;"></div><div class="t" style="left:921.5999999999999px;top:303px;font-size:6.85px;color:#d2d2d2;">1</div>
<div class="t j" style="left:654.6px;top:312.16px;font-size:6.5px;color:#c4c4c4;transform:scaleX(0.686);">オフセット</div>
<div class="t" style="left:808.9px;top:314px;font-size:6.85px;color:#c4c4c4;">X</div><div style="position:absolute;left:816.6px;top:312.0px;width:93px;height:8.8px;background:#2a2a2a;border-radius:1.2px;box-shadow:inset 0 .6px 0 #1e1e1e;"></div><div class="t" style="left:818.4px;top:314px;font-size:6.85px;color:#d2d2d2;">0</div><div class="t" style="left:912.4px;top:314px;font-size:6.85px;color:#c4c4c4;">Y</div><div style="position:absolute;left:919.8px;top:312.0px;width:93px;height:8.8px;background:#2a2a2a;border-radius:1.2px;box-shadow:inset 0 .6px 0 #1e1e1e;"></div><div class="t" style="left:921.5999999999999px;top:314px;font-size:6.85px;color:#d2d2d2;">0</div>
<div style="position:absolute;left:635.6px;top:329px;width:381.6px;height:0.8px;background:#232323;"></div><div style="position:absolute;left:635.6px;top:329.8px;width:381.6px;height:9.4px;background:#333333;"></div><svg style="position:absolute;left:645.0px;top:333.0px;" width="4.8" height="3.2" viewBox="0 0 4.8 3.2"><path d="M0 0H4.8L2.4 3.2Z" fill="#858585"/></svg><div class="t j" style="left:652.8px;top:330.70px;font-size:6.6px;color:#e0e0e0;font-weight:bold;transform:scaleX(0.785);">ディテール入力</div>
<svg style="position:absolute;left:997px;top:331.8px;" width="5.8" height="5.8" viewBox="0 0 5.8 5.8"><circle cx="2.9" cy="2.9" r="2.8" fill="#d6d6d6"/><path d="M2 2.3Q2.1 1.3 3 1.3T3.9 2.3Q3.8 2.9 2.9 3.2V3.8" fill="none" stroke="#303030" stroke-width=".8"/><circle cx="2.9" cy="4.6" r=".4" fill="#303030"/></svg>
<div style="position:absolute;left:655px;top:341.4px;width:8px;height:8px;background:#424242;border-radius:.6px;"></div>
<svg style="position:absolute;left:665.7px;top:343.2px;" width="4.6" height="4.6" viewBox="0 0 4.6 4.6"><circle cx="2.3" cy="2.3" r="1.6" fill="none" stroke="#c4c4c4" stroke-width=".95"/></svg>
<div class="t j" style="left:671px;top:341.76px;font-size:6.5px;color:#c4c4c4;transform:scaleX(0.659);">マスク</div>
<div style="position:absolute;left:655px;top:353px;width:8px;height:8px;background:#424242;border-radius:.6px;"></div>
<svg style="position:absolute;left:665.7px;top:354.8px;" width="4.6" height="4.6" viewBox="0 0 4.6 4.6"><circle cx="2.3" cy="2.3" r="1.6" fill="none" stroke="#c4c4c4" stroke-width=".95"/></svg>
<div class="t j" style="left:671px;top:353.36px;font-size:6.5px;color:#c4c4c4;transform:scaleX(0.664);">ベースマップ</div>
<div style="position:absolute;left:655px;top:364.5px;width:8px;height:8px;background:#424242;border-radius:.6px;"></div>
<svg style="position:absolute;left:665.7px;top:366.3px;" width="4.6" height="4.6" viewBox="0 0 4.6 4.6"><circle cx="2.3" cy="2.3" r="1.6" fill="none" stroke="#c4c4c4" stroke-width=".95"/></svg>
<div class="t j" style="left:671px;top:364.86px;font-size:6.5px;color:#c4c4c4;transform:scaleX(0.680);">法線マップ</div>
<div class="t j" style="left:654.6px;top:376.36px;font-size:6.5px;color:#c4c4c4;transform:scaleX(0.686);">タイリング</div>
<div class="t" style="left:808.9px;top:378px;font-size:6.85px;color:#c4c4c4;">X</div><div style="position:absolute;left:816.6px;top:375.8px;width:93px;height:8.8px;background:#2a2a2a;border-radius:1.2px;box-shadow:inset 0 .6px 0 #1e1e1e;"></div><div class="t" style="left:818.4px;top:378px;font-size:6.85px;color:#d2d2d2;">1</div><div class="t" style="left:912.4px;top:378px;font-size:6.85px;color:#c4c4c4;">Y</div><div style="position:absolute;left:919.8px;top:375.8px;width:93px;height:8.8px;background:#2a2a2a;border-radius:1.2px;box-shadow:inset 0 .6px 0 #1e1e1e;"></div><div class="t" style="left:921.5999999999999px;top:378px;font-size:6.85px;color:#d2d2d2;">1</div>
<div class="t j" style="left:654.6px;top:387.16px;font-size:6.5px;color:#c4c4c4;transform:scaleX(0.686);">オフセット</div>
<div class="t" style="left:808.9px;top:388px;font-size:6.85px;color:#c4c4c4;">X</div><div style="position:absolute;left:816.6px;top:386.6px;width:93px;height:8.8px;background:#2a2a2a;border-radius:1.2px;box-shadow:inset 0 .6px 0 #1e1e1e;"></div><div class="t" style="left:818.4px;top:389px;font-size:6.85px;color:#d2d2d2;">0</div><div class="t" style="left:912.4px;top:388px;font-size:6.85px;color:#c4c4c4;">Y</div><div style="position:absolute;left:919.8px;top:386.6px;width:93px;height:8.8px;background:#2a2a2a;border-radius:1.2px;box-shadow:inset 0 .6px 0 #1e1e1e;"></div><div class="t" style="left:921.5999999999999px;top:389px;font-size:6.85px;color:#d2d2d2;">0</div>
<div style="position:absolute;left:635.6px;top:403.6px;width:381.6px;height:0.8px;background:#232323;"></div><div style="position:absolute;left:635.6px;top:404.40000000000003px;width:381.6px;height:9.4px;background:#333333;"></div><svg style="position:absolute;left:645.5px;top:406.6px;" width="3.4" height="4.8" viewBox="0 0 3.4 4.8"><path d="M0 0V4.8L3.4 2.4Z" fill="#858585"/></svg><div class="t j" style="left:652.8px;top:405.30px;font-size:6.6px;color:#e0e0e0;font-weight:bold;transform:scaleX(0.777);">詳細オプション</div>
<div style="position:absolute;left:635.6px;top:414px;width:381.6px;height:4.2px;background:#363636;"></div>
<div style="position:absolute;left:635.6px;top:418.2px;width:381.6px;height:0.8px;background:#232323;"></div>
<div style="position:absolute;left:765.4px;top:423.2px;width:121.2px;height:10.6px;background:#515151;border-radius:1.2px;"></div>
<div class="t j" style="left:800.4px;top:424.96px;font-size:6.5px;color:#d6d6d6;transform:scaleX(0.747);">コンポーネントを追加</div>
<div style="position:absolute;left:1017.2px;top:55px;width:6.8px;height:385.6px;background:#353535;"></div>
<div style="position:absolute;left:1017.2px;top:55px;width:0.6px;height:385.6px;background:#2b2b2b;"></div>
<div style="position:absolute;left:1018.2px;top:245px;width:4.6px;height:171px;background:#5f5f5f;border-radius:2.3px;"></div>
<svg style="position:absolute;left:1018.6px;top:57.8px;" width="4" height="2.4" viewBox="0 0 4 2.4"><path d="M0 2.4H4L2 0Z" fill="#c8c8c8"/></svg>
<svg style="position:absolute;left:1018.6px;top:431.6px;" width="4" height="2.4" viewBox="0 0 4 2.4"><path d="M0 0H4L2 2.4Z" fill="#c8c8c8"/></svg>
<div style="position:absolute;left:635.6px;top:440.2px;width:388.4px;height:1px;background:#232323;"></div>
<div style="position:absolute;left:635.6px;top:441.2px;width:388.4px;height:10.8px;background:#3c3c3c;"></div>
<div class="t j" style="left:638.6px;top:444px;font-size:6.85px;color:#d0d0d0;font-weight:bold;transform:scaleX(0.937);">BambooSword</div>
<div style="position:absolute;left:686.6px;top:445.6px;width:327.6px;height:0.6px;background:#4a4a4a;"></div>
<div style="position:absolute;left:686.6px;top:447.6px;width:327.6px;height:0.6px;background:#4a4a4a;"></div>
<svg style="position:absolute;left:1019.1999999999999px;top:444.2px;" width="1.2" height="5.6" viewBox="0 0 1.2 5.6"><rect x="0" y="0" width="1.2" height="1.2" fill="#c4c4c4"/><rect x="0" y="2.2" width="1.2" height="1.2" fill="#c4c4c4"/><rect x="0" y="4.4" width="1.2" height="1.2" fill="#c4c4c4"/></svg>
<div style="position:absolute;left:635.6px;top:452px;width:388.4px;height:59.6px;background:#525252;"></div>
<svg style="position:absolute;left:808px;top:472px;" width="36" height="24" viewBox="0 0 36 24"><path d="M2.8 21 27 6.8" stroke="#5b5334" stroke-width="1.5"/><path d="M2.8 20.6 27 6.4" stroke="#7d7350" stroke-width=".5"/><path d="M27 6.8 32.6 3.6" stroke="#c9c9cc" stroke-width="1.1"/><path d="M2.2 21.4 4.2 20.2" stroke="#d8d8d8" stroke-width="1.4"/><circle cx="27.2" cy="6.6" r="1.2" fill="#6e5a30"/></svg>
<div style="position:absolute;left:635.6px;top:511.6px;width:388.4px;height:26.4px;background:#383838;"></div>
<div style="position:absolute;left:635.6px;top:511.6px;width:388.4px;height:1.4px;background:#2e2e2e;"></div>
<svg style="position:absolute;left:1011.9px;top:514.1px;" width="9.8" height="9.8" viewBox="0 0 9.8 9.8"><circle cx="4.9" cy="4.9" r="4.8" fill="#28579d"/><path d="M2.4 4.2 3.6 3 6.6 4.6 7.2 6.4 6 7.2 3 5.6Z" fill="#e8eefa"/><circle cx="3.5" cy="4.2" r=".45" fill="#28579d"/></svg>
<div class="t j" style="left:637.6px;top:527.56px;font-size:6.5px;color:#b8b8b8;transform:scaleX(0.683);">アセットバンドル</div>
<div style="position:absolute;left:685.8px;top:527px;width:258.4px;height:8.6px;background:#515151;border-radius:1.2px;"></div><div class="t" style="left:687.5999999999999px;top:529px;font-size:6.85px;color:#d2d2d2;">None</div><svg style="position:absolute;left:937.5999999999999px;top:530.35px;" width="4" height="2.3" viewBox="0 0 4 2.3"><path d="M0 0H4L2.0 2.3Z" fill="#d8d8d8"/></svg>
<div style="position:absolute;left:948.6px;top:527px;width:73px;height:8.6px;background:#515151;border-radius:1.2px;"></div><div class="t" style="left:950.4px;top:529px;font-size:6.85px;color:#d2d2d2;">None</div><svg style="position:absolute;left:1015.0px;top:530.35px;" width="4" height="2.3" viewBox="0 0 4 2.3"><path d="M0 0H4L2.0 2.3Z" fill="#d8d8d8"/></svg>
<div style="position:absolute;left:0px;top:538px;width:1024px;height:12px;background:#191919;"></div>
<svg style="position:absolute;left:984px;top:540.2px;" width="8" height="8" viewBox="0 0 8 8"><ellipse cx="4" cy="4.4" rx="1.9" ry="2.5" fill="#c4c4c4"/><path d="M4 1.8V.8M1 2.2 2.4 3.2M7 2.2 5.6 3.2M.6 4.6H2M7.4 4.6H6M1 7 2.4 6M7 7 5.6 6" stroke="#c4c4c4" stroke-width=".7"/><path d="M.8 7.4 7.2 .8" stroke="#191919" stroke-width="1.3"/><path d="M.8 7.4 7.2 .8" stroke="#c4c4c4" stroke-width=".6"/></svg>
<svg style="position:absolute;left:998.4px;top:540.2px;" width="8" height="8" viewBox="0 0 8 8"><ellipse cx="4" cy="1.8" rx="3" ry="1.3" fill="#c4c4c4"/><path d="M1 3.2Q4 5 7 3.2M1 5Q4 6.8 7 5" fill="none" stroke="#c4c4c4" stroke-width=".8"/><path d="M1 7.4 7.2 1.6" stroke="#191919" stroke-width="1.2"/><path d="M1 7.4 7.2 1.6" stroke="#c4c4c4" stroke-width=".6"/></svg>
<svg style="position:absolute;left:1012.6px;top:540.4px;" width="7.8" height="7.8" viewBox="0 0 7.8 7.8"><circle cx="3.9" cy="3.9" r="3.3" fill="none" stroke="#c4c4c4" stroke-width=".8"/><path d="M2.2 4 3.4 5.2 5.6 2.8" fill="none" stroke="#c4c4c4" stroke-width=".8"/></svg>
</div></body></html>
